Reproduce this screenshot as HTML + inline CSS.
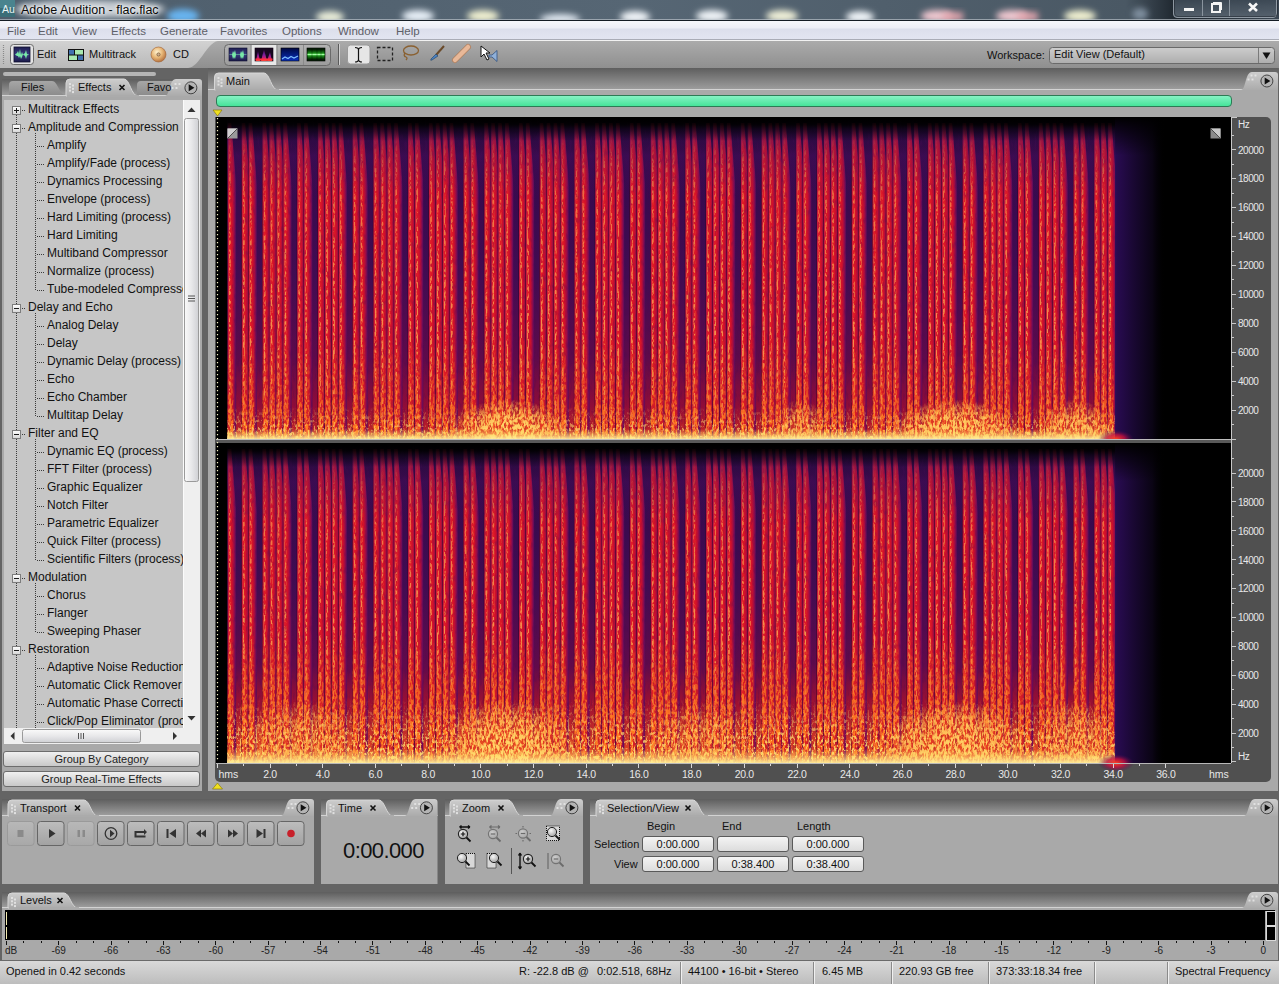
<!DOCTYPE html>
<html><head><meta charset="utf-8">
<style>
*{box-sizing:border-box}
html,body{margin:0;padding:0;width:1279px;height:984px;overflow:hidden;background:#646464;font-family:"Liberation Sans",sans-serif;}
.a{position:absolute}
.t{position:absolute;white-space:nowrap}
#title{left:0;top:0;width:1279px;height:21px;background:linear-gradient(90deg,#5d6a76 0px,#8d97a2 40px,#c4cad1 120px,#aab3bc 250px,#56636f 330px,#4b5866 600px,#4a5765 1279px);border-bottom:1px solid #1b2430}
#menu{left:0;top:21px;width:1279px;height:19px;background:linear-gradient(#f6f7fb 0,#eceef6 7px,#dcdfec 8px,#e2e5f1 100%);border-bottom:1px solid #a9acb6;font-size:11.5px;color:#5e6068}
#menu span{position:absolute;top:3.5px;margin-left:-1px}
#tool{left:0;top:40px;width:1279px;height:28px;background:linear-gradient(#ababab,#8f8f8f);border-top:1px solid #f2f2f2}
.strip{background:linear-gradient(#5c5c5c,#979797)}
.body{background:#a9a9a9;border-top:1px solid #d4d4d4}
.f11{font-size:11px}
.f12{font-size:12px}
.tree div{position:absolute;white-space:nowrap;font-size:12px;color:#111}
.btn{position:absolute;border:1px solid #7a7a7a;border-radius:4px;background:linear-gradient(#c4c4c4,#a4a4a4)}
.field{position:absolute;height:16px;background:linear-gradient(#f4f4f4,#dcdcdc);border:1px solid #5a5a5a;border-radius:3px;font-size:11px;color:#111;text-align:center;line-height:14px}
.gbtn{position:absolute;left:3px;width:197px;height:16px;border:1px solid #6c6c6c;border-radius:3px;background:linear-gradient(#f0f0f0,#c8c8c8);font-size:11px;color:#222;text-align:center;line-height:14px}
.hz{position:absolute;left:1238px;font-size:10px;letter-spacing:-0.45px;color:#e8e8e8;white-space:nowrap}
.tm{position:absolute;top:767.5px;font-size:10.5px;letter-spacing:-0.3px;color:#e8e8e8;white-space:nowrap;transform:translateX(-50%)}
.db{position:absolute;top:945px;font-size:10px;color:#222;white-space:nowrap;transform:translateX(-50%)}
.st{position:absolute;top:965px;font-size:11px;color:#111;white-space:nowrap}
.sep{position:absolute;top:962px;width:2px;height:22px;border-left:1px solid #8a8a8a;border-right:1px solid #f0f0f0}
</style></head><body>
<!-- TITLE -->
<svg class="a" style="left:0;top:0" width="1279" height="21">
 <defs>
  <filter id="bl4" x="-50%" y="-50%" width="200%" height="200%"><feGaussianBlur stdDeviation="3"/></filter>
  <filter id="bl6" x="-50%" y="-50%" width="200%" height="200%"><feGaussianBlur stdDeviation="7"/></filter>
  <linearGradient id="tbg" x1="0" y1="0" x2="1" y2="0"><stop offset="0" stop-color="#4e5e6c"/><stop offset="0.5" stop-color="#566674"/><stop offset="0.88" stop-color="#4a5864"/><stop offset="0.92" stop-color="#1e262e"/><stop offset="1" stop-color="#3a4652"/></linearGradient>
 </defs>
 <rect x="0" y="0" width="1279" height="21" fill="url(#tbg)"/>
 <g filter="url(#bl4)" opacity="1">
  <ellipse cx="90" cy="9" rx="75" ry="9" fill="#c8ced4"/>
  <ellipse cx="183" cy="16" rx="16" ry="7" fill="#68b4f0"/>
  <ellipse cx="330" cy="17" rx="14" ry="6" fill="#e8ecd8"/>
  <ellipse cx="418" cy="16" rx="16" ry="6" fill="#e8f0f8"/>
  <ellipse cx="483" cy="16" rx="16" ry="6" fill="#f0f0d0"/>
  <ellipse cx="560" cy="19" rx="20" ry="5" fill="#e0e8f0"/>
  <ellipse cx="635" cy="17" rx="15" ry="6" fill="#f0f4f8"/>
  <ellipse cx="712" cy="16" rx="16" ry="6" fill="#f0f4f8"/>
  <ellipse cx="782" cy="16" rx="16" ry="6" fill="#f0f0d8"/>
  <ellipse cx="860" cy="17" rx="14" ry="6" fill="#f0f4f8"/>
  <ellipse cx="937" cy="16" rx="16" ry="6" fill="#f0c8d0"/>
  <ellipse cx="1012" cy="16" rx="16" ry="6" fill="#f0c8d0"/>
  <ellipse cx="1080" cy="16" rx="16" ry="6" fill="#f0f0d0"/>
  <ellipse cx="1140" cy="14" rx="8" ry="6" fill="#8090a0"/>
 </g>
 <g opacity="0.9">
  <rect x="943" y="12" width="20" height="9" fill="#e8a8b0" filter="url(#bl4)"/>
  <rect x="1018" y="12" width="20" height="9" fill="#e8a8b0" filter="url(#bl4)"/>
 </g>
 <rect x="0" y="19" width="1279" height="1" fill="#c8ced6" opacity="0.6"/>
 <rect x="0" y="20" width="1279" height="1" fill="#141c24"/>
 <rect x="0" y="0" width="15" height="17" rx="1" fill="#3a6e78"/>
 <rect x="0" y="0" width="15" height="8" fill="#5a9aa4" opacity="0.5"/>
 <text x="2" y="12.5" font-family="Liberation Sans" font-size="10.5" fill="#e8f4f4">Au</text>
</svg>
<div class="t" style="left:21px;top:3px;font-size:12.5px;color:#0a0a0a;text-shadow:0 0 6px #fff,0 0 3px #fff">Adobe Audition - flac.flac</div>

<!-- MENU -->
<div id="menu" class="a">
  <span style="left:8px">File</span><span style="left:39px">Edit</span><span style="left:73px">View</span><span style="left:112px">Effects</span><span style="left:161px">Generate</span><span style="left:221px">Favorites</span><span style="left:283px">Options</span><span style="left:339px">Window</span><span style="left:397px">Help</span>
</div>
<!-- TOOLBAR -->
<div id="tool" class="a">
  <svg class="a" style="left:0;top:0" width="230" height="28"><defs><linearGradient id="tg" x1="0" y1="0" x2="0" y2="1"><stop offset="0" stop-color="#d2d2d2"/><stop offset="1" stop-color="#b9b9b9"/></linearGradient></defs><path d="M0 0 H218 C206 2 200 26 188 27 H0 Z" fill="url(#tg)"/></svg>
  <div class="t f11" style="left:37px;top:7px;color:#111">Edit</div>
  <div class="t f11" style="left:89px;top:7px;color:#111">Multitrack</div>
  <div class="t f11" style="left:173px;top:7px;color:#111">CD</div>
  <div class="t f11" style="left:987px;top:8px;color:#111">Workspace:</div>
  </div>

<!-- window buttons -->
<svg class="a" style="left:1173px;top:0" width="105" height="19">
 <defs><linearGradient id="wb" x1="0" y1="0" x2="0" y2="1"><stop offset="0" stop-color="#3e4a56"/><stop offset="1" stop-color="#5a6672"/></linearGradient></defs>
 <path d="M0.5,0 V14 Q0.5,17.5 4,17.5 H100 Q103.5,17.5 103.5,14 V0" fill="url(#wb)" stroke="#9aa4ae" stroke-width="1" opacity="0.9"/>
 <path d="M0.5,0 V14 Q0.5,17.5 4,17.5 H100 Q103.5,17.5 103.5,14 V0" fill="none" stroke="#1a2028" stroke-width="1" transform="translate(1,-1)" opacity="0.5"/>
 <line x1="29.5" y1="0" x2="29.5" y2="16" stroke="#8a949e"/><line x1="56.5" y1="0" x2="56.5" y2="16" stroke="#8a949e"/>
 <rect x="11" y="8" width="10" height="3" fill="#f4f4f4"/>
 <rect x="39" y="4" width="8" height="8" fill="none" stroke="#f4f4f4" stroke-width="2"/>
 <path d="M40,2.5 H48.5 V10" fill="none" stroke="#f4f4f4" stroke-width="1"/>
 <path d="M76,3.5 L84,11 M84,3.5 L76,11" stroke="#f8f8f8" stroke-width="2.6"/>
</svg>
<!-- toolbar -->
<svg class="a" style="left:0;top:40px" width="520" height="28">
 <defs>
  <linearGradient id="nv" x1="0" y1="0" x2="0" y2="1"><stop offset="0" stop-color="#1e1e50"/><stop offset="0.5" stop-color="#3a3a80"/><stop offset="1" stop-color="#1a1a48"/></linearGradient>
  <radialGradient id="cd" cx="0.4" cy="0.35" r="0.7"><stop offset="0" stop-color="#fff2d0"/><stop offset="0.5" stop-color="#e8b878"/><stop offset="1" stop-color="#b06a38"/></radialGradient>
  <linearGradient id="vb" x1="0" y1="0" x2="0" y2="1"><stop offset="0" stop-color="#b4b4b4"/><stop offset="1" stop-color="#9c9c9c"/></linearGradient>
  <linearGradient id="sp" x1="0" y1="0" x2="0" y2="1"><stop offset="0" stop-color="#200830"/><stop offset="0.5" stop-color="#8020a0"/><stop offset="0.85" stop-color="#e02060"/><stop offset="1" stop-color="#ff6020"/></linearGradient>
  <linearGradient id="bl" x1="0" y1="0" x2="0" y2="1"><stop offset="0" stop-color="#000840"/><stop offset="1" stop-color="#0830c0"/></linearGradient>
  <linearGradient id="gr" x1="0" y1="0" x2="0" y2="1"><stop offset="0" stop-color="#003000"/><stop offset="0.5" stop-color="#30e030"/><stop offset="1" stop-color="#003000"/></linearGradient>
 </defs>
 <line x1="3.5" y1="5" x2="3.5" y2="24" stroke="#8a8a8a" stroke-dasharray="1,1" stroke-width="1.2"/>
 <rect x="10.5" y="4.5" width="23" height="20" rx="3" fill="#e4e4e4" stroke="#6a6a6a"/>
 <rect x="14" y="7" width="16" height="15" fill="url(#nv)" stroke="#101030" stroke-width="0.8"/>
 <path d="M15,14.5 L17,13 L18,11 L19,14 L20,9 L21,15 L22,12 L23,14.5 L25,13 L26,10 L27,14 L29,14.5 L27,15.5 L26,19 L25,16 L23,14.5 L22,17 L21,19 L20,16 L19,18 L18,16 L17,16 Z" fill="#78e8a8"/>
 <rect x="68" y="9" width="16" height="12" fill="#111"/>
 <rect x="69" y="10" width="5" height="4.5" fill="#4070b0"/><rect x="75" y="10" width="8" height="4.5" fill="#a8e8b0"/>
 <rect x="69" y="15.5" width="8" height="4.5" fill="#a8e8b0"/><rect x="78" y="15.5" width="5" height="4.5" fill="#4070b0"/>
 <circle cx="158.5" cy="14.5" r="7.5" fill="url(#cd)" stroke="#a06030" stroke-width="0.6"/>
 <circle cx="158.5" cy="14.5" r="1.6" fill="#d0b090" stroke="#604020" stroke-width="0.6"/>
 <rect x="224.5" y="4.5" width="106" height="21" rx="4" fill="url(#vb)" stroke="#6a6a6a"/>
 <rect x="251.5" y="5" width="25" height="20" fill="#e8e8e8"/>
 <line x1="251" y1="5" x2="251" y2="25" stroke="#8a8a8a"/><line x1="277" y1="5" x2="277" y2="25" stroke="#8a8a8a"/><line x1="303.5" y1="5" x2="303.5" y2="25" stroke="#8a8a8a"/>
 <rect x="229" y="8" width="18" height="13" fill="url(#nv)" stroke="#101030" stroke-width="0.6"/>
 <path d="M229.5,14.5 H232 L233,11 L234,13 L235,10 L236,14.5 H238 H240 L241,11 L242,13 L243,10 L244,14.5 H246.5 V15 H244 L243,19 L242,17 L241,19 L240,15 H236 L235,19 L234,17 L233,19 L232,15 H229.5 Z" fill="#78e8a8"/>
 <rect x="255" y="8" width="18" height="13" fill="#180820" stroke="#100010" stroke-width="0.6"/>
 <path d="M256,21 L258,11 L260,21 Z M261,21 L264,9 L267,21 Z M267,21 L270,12 L272,21 Z" fill="url(#sp)"/>
 <rect x="255.5" y="18.5" width="17" height="2" fill="#ff3040"/>
 <rect x="281" y="8" width="18" height="13" fill="url(#bl)" stroke="#000" stroke-width="0.6"/>
 <path d="M282,19 L285,17 L288,18.5 L291,16.5 L294,18 L298,16" stroke="#80c0ff" stroke-width="1.2" fill="none"/>
 <rect x="307" y="8" width="18" height="13" fill="#062006" stroke="#000" stroke-width="0.6"/>
 <rect x="307.5" y="10" width="17" height="9" fill="url(#gr)" opacity="0.8"/>
 <path d="M307.5,14.5 H324.5" stroke="#a0ffa0" stroke-width="1.4"/>
 <path d="M312,9 V20 M317,9 V20 M321,9 V20" stroke="#000" stroke-width="0.5" opacity="0.6"/>
 <line x1="338.5" y1="4" x2="338.5" y2="25" stroke="#5a5a5a"/><line x1="339.5" y1="4" x2="339.5" y2="25" stroke="#d0d0d0"/>
 <rect x="347.5" y="5" width="22.5" height="19" rx="3" fill="#e6e6e6" stroke="#9a9a9a"/>
 <path d="M355,7.5 Q358.5,7.5 358.5,10 V19.5 Q358.5,22 355,22 M362,7.5 Q358.5,7.5 358.5,10 M362,22 Q358.5,22 358.5,19.5" fill="none" stroke="#111" stroke-width="1.2"/>
 <rect x="377.5" y="7.5" width="15" height="13" fill="none" stroke="#222" stroke-width="1.3" stroke-dasharray="3,2"/>
 <ellipse cx="411" cy="10.5" rx="7.5" ry="4.5" fill="none" stroke="#8a6030" stroke-width="1.3"/>
 <path d="M405,13 Q403,16 406,17 Q408,18 406,20" fill="none" stroke="#8a6030" stroke-width="1.3"/>
 <path d="M444,6 L436,15" stroke="#6a4a2a" stroke-width="2"/>
 <path d="M436,14 L431,19 Q430,21 432,20 L438,16 Z" fill="#4a80c0" stroke="#204060" stroke-width="0.6"/>
 <path d="M455,20 L468,7" stroke="#b08060" stroke-width="6" stroke-linecap="round"/>
 <path d="M455,20 L468,7" stroke="#e8b898" stroke-width="4.5" stroke-linecap="round"/>
 <path d="M481,6 L481,17 L484,14 L487,20 L489,19 L486,13 L490,13 Z" fill="#fff" stroke="#111" stroke-width="1"/>
 <path d="M489,15 H492 L497,10.5 V21.5 L492,17 H489 Z" fill="#90b0d8" stroke="#305080" stroke-width="0.8"/>
</svg>
<!-- workspace dropdown -->
<svg class="a" style="left:1049px;top:47px" width="227" height="17">
 <defs><linearGradient id="dd" x1="0" y1="0" x2="0" y2="1"><stop offset="0" stop-color="#cdcdcd"/><stop offset="1" stop-color="#adadad"/></linearGradient></defs>
 <rect x="0.5" y="0.5" width="225" height="16" rx="3" fill="url(#dd)" stroke="#6a6a6a"/>
 <line x1="209.5" y1="1" x2="209.5" y2="16" stroke="#7a7a7a"/>
 <path d="M213.5,5.5 H221.5 L217.5,12 Z" fill="#111"/>
</svg>

<div class="t f11" style="left:1054px;top:48px;color:#111">Edit View (Default)</div>
<!-- LEFT PANEL -->
<div class="a" style="left:3px;top:72px;width:153px;height:4px;border-radius:2px;background:#b4b4b4"></div>
<svg class="a" style="left:2px;top:79px;overflow:visible" width="200" height="712"><defs><linearGradient id="stL" x1="0" y1="0" x2="0" y2="1"><stop offset="0" stop-color="#5e5e5e"/><stop offset="1" stop-color="#9c9c9c"/></linearGradient><linearGradient id="taL" x1="0" y1="0" x2="0" y2="1"><stop offset="0" stop-color="#cdcdcd"/><stop offset="1" stop-color="#ababab"/></linearGradient><linearGradient id="tiL" x1="0" y1="0" x2="0" y2="1"><stop offset="0" stop-color="#a6a6a6"/><stop offset="1" stop-color="#8c8c8c"/></linearGradient></defs><rect x="0" y="0" width="200" height="16" fill="url(#stL)"/><rect x="0" y="16" width="200" height="696" fill="#a9a9a9"/><rect x="0" y="16" width="200" height="1" fill="#d2d2d2"/><path d="M7,16 V6 Q7,2 11,2 H50 C56,2 57,16 64,16 Z" fill="url(#tiL)" stroke="#9a9a9a" stroke-width="0"/><path d="M135,16 V6 Q135,2 139,2 H173 C179,2 180,16 187,16 Z" fill="url(#tiL)" stroke="#9a9a9a" stroke-width="0"/><path d="M64,17 V4 Q64,0 68,0 H122 C128,0 129,17 136,17 Z" fill="url(#taL)" stroke="#d6d6d6" stroke-width="1"/><rect x="65" y="16" width="72" height="2" fill="#ababab"/><g transform="translate(67,4)"><rect x="0" y="0.0" width="2" height="2" fill="#e0e0e0"/><rect x="3" y="1.5" width="2" height="2" fill="#e0e0e0"/><rect x="0" y="3.3" width="2" height="2" fill="#e0e0e0"/><rect x="3" y="4.8" width="2" height="2" fill="#e0e0e0"/><rect x="0" y="6.6" width="2" height="2" fill="#e0e0e0"/><rect x="3" y="8.1" width="2" height="2" fill="#e0e0e0"/></g><path d="M117.5,6.0 L122.5,11.0 M122.5,6.0 L117.5,11.0" stroke="#111" stroke-width="1.6"/><path d="M163,17 C168,17 167,0 174,0 H197 Q200,0 200,3 V17 Z" fill="url(#taL)"/><g transform="translate(169.5,4.0)"><rect x="3" y="0" width="2" height="2" fill="#e6e6e6" opacity="0.85"/><rect x="7" y="0" width="2" height="2" fill="#e6e6e6" opacity="0.85"/><rect x="0" y="4" width="2" height="2" fill="#e6e6e6" opacity="0.85"/><rect x="4" y="4" width="2" height="2" fill="#e6e6e6" opacity="0.85"/></g><circle cx="188.9" cy="8.8" r="6" fill="#b4b4b4" stroke="#444" stroke-width="1"/><path d="M186.70000000000002,5.300000000000001 L192.4,8.8 L186.70000000000002,12.3 Z" fill="#111"/></svg>
<div class="a" style="left:4px;top:100px;width:196px;height:644px;background:#c6c6c6"></div>
<div class="t f11" style="left:21px;top:81px;color:#111">Files</div>
<div class="t f11" style="left:78px;top:81px;color:#111">Effects</div>
<div class="t f11" style="left:147px;top:81px;color:#111">Favo</div>
<div class="tree a" style="left:0;top:0;width:183px;height:728px;overflow:hidden"><span style="position:absolute;left:16px;top:115px;width:1px;height:615px;background:repeating-linear-gradient(#3a3a3a 0 1px,transparent 1px 2px)"></span><span style="position:absolute;left:12px;top:105.5px;width:9px;height:9px;border:1px solid #7d7d7d;background:linear-gradient(#fdfdfd,#d8d8d8);z-index:1"></span><span style="position:absolute;left:14px;top:109.5px;width:5px;height:1px;background:#1a1a1a;z-index:2"></span><span style="position:absolute;left:16px;top:107.5px;width:1px;height:5px;background:#1a1a1a;z-index:2"></span><span style="position:absolute;left:22px;top:109.5px;width:4px;height:1px;background:repeating-linear-gradient(90deg,#3a3a3a 0 1px,transparent 1px 2px)"></span><div style="left:28px;top:102.0px">Multitrack Effects</div><span style="position:absolute;left:12px;top:123.5px;width:9px;height:9px;border:1px solid #7d7d7d;background:linear-gradient(#fdfdfd,#d8d8d8);z-index:1"></span><span style="position:absolute;left:14px;top:127.5px;width:5px;height:1px;background:#1a1a1a;z-index:2"></span><span style="position:absolute;left:22px;top:127.5px;width:4px;height:1px;background:repeating-linear-gradient(90deg,#3a3a3a 0 1px,transparent 1px 2px)"></span><div style="left:28px;top:120.0px">Amplitude and Compression</div><span style="position:absolute;left:35px;top:133.0px;width:1px;height:156.5px;background:repeating-linear-gradient(#3a3a3a 0 1px,transparent 1px 2px)"></span><span style="position:absolute;left:37px;top:145.5px;width:8px;height:1px;background:repeating-linear-gradient(90deg,#3a3a3a 0 1px,transparent 1px 2px)"></span><div style="left:47px;top:138.0px">Amplify</div><span style="position:absolute;left:37px;top:163.5px;width:8px;height:1px;background:repeating-linear-gradient(90deg,#3a3a3a 0 1px,transparent 1px 2px)"></span><div style="left:47px;top:156.0px">Amplify/Fade (process)</div><span style="position:absolute;left:37px;top:181.5px;width:8px;height:1px;background:repeating-linear-gradient(90deg,#3a3a3a 0 1px,transparent 1px 2px)"></span><div style="left:47px;top:174.0px">Dynamics Processing</div><span style="position:absolute;left:37px;top:199.5px;width:8px;height:1px;background:repeating-linear-gradient(90deg,#3a3a3a 0 1px,transparent 1px 2px)"></span><div style="left:47px;top:192.0px">Envelope (process)</div><span style="position:absolute;left:37px;top:217.5px;width:8px;height:1px;background:repeating-linear-gradient(90deg,#3a3a3a 0 1px,transparent 1px 2px)"></span><div style="left:47px;top:210.0px">Hard Limiting (process)</div><span style="position:absolute;left:37px;top:235.5px;width:8px;height:1px;background:repeating-linear-gradient(90deg,#3a3a3a 0 1px,transparent 1px 2px)"></span><div style="left:47px;top:228.0px">Hard Limiting</div><span style="position:absolute;left:37px;top:253.5px;width:8px;height:1px;background:repeating-linear-gradient(90deg,#3a3a3a 0 1px,transparent 1px 2px)"></span><div style="left:47px;top:246.0px">Multiband Compressor</div><span style="position:absolute;left:37px;top:271.5px;width:8px;height:1px;background:repeating-linear-gradient(90deg,#3a3a3a 0 1px,transparent 1px 2px)"></span><div style="left:47px;top:264.0px">Normalize (process)</div><span style="position:absolute;left:37px;top:289.5px;width:8px;height:1px;background:repeating-linear-gradient(90deg,#3a3a3a 0 1px,transparent 1px 2px)"></span><div style="left:47px;top:282.0px">Tube-modeled Compressor</div><span style="position:absolute;left:12px;top:303.5px;width:9px;height:9px;border:1px solid #7d7d7d;background:linear-gradient(#fdfdfd,#d8d8d8);z-index:1"></span><span style="position:absolute;left:14px;top:307.5px;width:5px;height:1px;background:#1a1a1a;z-index:2"></span><span style="position:absolute;left:22px;top:307.5px;width:4px;height:1px;background:repeating-linear-gradient(90deg,#3a3a3a 0 1px,transparent 1px 2px)"></span><div style="left:28px;top:300.0px">Delay and Echo</div><span style="position:absolute;left:35px;top:313.0px;width:1px;height:102.5px;background:repeating-linear-gradient(#3a3a3a 0 1px,transparent 1px 2px)"></span><span style="position:absolute;left:37px;top:325.5px;width:8px;height:1px;background:repeating-linear-gradient(90deg,#3a3a3a 0 1px,transparent 1px 2px)"></span><div style="left:47px;top:318.0px">Analog Delay</div><span style="position:absolute;left:37px;top:343.5px;width:8px;height:1px;background:repeating-linear-gradient(90deg,#3a3a3a 0 1px,transparent 1px 2px)"></span><div style="left:47px;top:336.0px">Delay</div><span style="position:absolute;left:37px;top:361.5px;width:8px;height:1px;background:repeating-linear-gradient(90deg,#3a3a3a 0 1px,transparent 1px 2px)"></span><div style="left:47px;top:354.0px">Dynamic Delay (process)</div><span style="position:absolute;left:37px;top:379.5px;width:8px;height:1px;background:repeating-linear-gradient(90deg,#3a3a3a 0 1px,transparent 1px 2px)"></span><div style="left:47px;top:372.0px">Echo</div><span style="position:absolute;left:37px;top:397.5px;width:8px;height:1px;background:repeating-linear-gradient(90deg,#3a3a3a 0 1px,transparent 1px 2px)"></span><div style="left:47px;top:390.0px">Echo Chamber</div><span style="position:absolute;left:37px;top:415.5px;width:8px;height:1px;background:repeating-linear-gradient(90deg,#3a3a3a 0 1px,transparent 1px 2px)"></span><div style="left:47px;top:408.0px">Multitap Delay</div><span style="position:absolute;left:12px;top:429.5px;width:9px;height:9px;border:1px solid #7d7d7d;background:linear-gradient(#fdfdfd,#d8d8d8);z-index:1"></span><span style="position:absolute;left:14px;top:433.5px;width:5px;height:1px;background:#1a1a1a;z-index:2"></span><span style="position:absolute;left:22px;top:433.5px;width:4px;height:1px;background:repeating-linear-gradient(90deg,#3a3a3a 0 1px,transparent 1px 2px)"></span><div style="left:28px;top:426.0px">Filter and EQ</div><span style="position:absolute;left:35px;top:439.0px;width:1px;height:120.5px;background:repeating-linear-gradient(#3a3a3a 0 1px,transparent 1px 2px)"></span><span style="position:absolute;left:37px;top:451.5px;width:8px;height:1px;background:repeating-linear-gradient(90deg,#3a3a3a 0 1px,transparent 1px 2px)"></span><div style="left:47px;top:444.0px">Dynamic EQ (process)</div><span style="position:absolute;left:37px;top:469.5px;width:8px;height:1px;background:repeating-linear-gradient(90deg,#3a3a3a 0 1px,transparent 1px 2px)"></span><div style="left:47px;top:462.0px">FFT Filter (process)</div><span style="position:absolute;left:37px;top:487.5px;width:8px;height:1px;background:repeating-linear-gradient(90deg,#3a3a3a 0 1px,transparent 1px 2px)"></span><div style="left:47px;top:480.0px">Graphic Equalizer</div><span style="position:absolute;left:37px;top:505.5px;width:8px;height:1px;background:repeating-linear-gradient(90deg,#3a3a3a 0 1px,transparent 1px 2px)"></span><div style="left:47px;top:498.0px">Notch Filter</div><span style="position:absolute;left:37px;top:523.5px;width:8px;height:1px;background:repeating-linear-gradient(90deg,#3a3a3a 0 1px,transparent 1px 2px)"></span><div style="left:47px;top:516.0px">Parametric Equalizer</div><span style="position:absolute;left:37px;top:541.5px;width:8px;height:1px;background:repeating-linear-gradient(90deg,#3a3a3a 0 1px,transparent 1px 2px)"></span><div style="left:47px;top:534.0px">Quick Filter (process)</div><span style="position:absolute;left:37px;top:559.5px;width:8px;height:1px;background:repeating-linear-gradient(90deg,#3a3a3a 0 1px,transparent 1px 2px)"></span><div style="left:47px;top:552.0px">Scientific Filters (process)</div><span style="position:absolute;left:12px;top:573.5px;width:9px;height:9px;border:1px solid #7d7d7d;background:linear-gradient(#fdfdfd,#d8d8d8);z-index:1"></span><span style="position:absolute;left:14px;top:577.5px;width:5px;height:1px;background:#1a1a1a;z-index:2"></span><span style="position:absolute;left:22px;top:577.5px;width:4px;height:1px;background:repeating-linear-gradient(90deg,#3a3a3a 0 1px,transparent 1px 2px)"></span><div style="left:28px;top:570.0px">Modulation</div><span style="position:absolute;left:35px;top:583.0px;width:1px;height:48.5px;background:repeating-linear-gradient(#3a3a3a 0 1px,transparent 1px 2px)"></span><span style="position:absolute;left:37px;top:595.5px;width:8px;height:1px;background:repeating-linear-gradient(90deg,#3a3a3a 0 1px,transparent 1px 2px)"></span><div style="left:47px;top:588.0px">Chorus</div><span style="position:absolute;left:37px;top:613.5px;width:8px;height:1px;background:repeating-linear-gradient(90deg,#3a3a3a 0 1px,transparent 1px 2px)"></span><div style="left:47px;top:606.0px">Flanger</div><span style="position:absolute;left:37px;top:631.5px;width:8px;height:1px;background:repeating-linear-gradient(90deg,#3a3a3a 0 1px,transparent 1px 2px)"></span><div style="left:47px;top:624.0px">Sweeping Phaser</div><span style="position:absolute;left:12px;top:645.5px;width:9px;height:9px;border:1px solid #7d7d7d;background:linear-gradient(#fdfdfd,#d8d8d8);z-index:1"></span><span style="position:absolute;left:14px;top:649.5px;width:5px;height:1px;background:#1a1a1a;z-index:2"></span><span style="position:absolute;left:22px;top:649.5px;width:4px;height:1px;background:repeating-linear-gradient(90deg,#3a3a3a 0 1px,transparent 1px 2px)"></span><div style="left:28px;top:642.0px">Restoration</div><span style="position:absolute;left:35px;top:655.0px;width:1px;height:80px;background:repeating-linear-gradient(#3a3a3a 0 1px,transparent 1px 2px)"></span><span style="position:absolute;left:37px;top:667.5px;width:8px;height:1px;background:repeating-linear-gradient(90deg,#3a3a3a 0 1px,transparent 1px 2px)"></span><div style="left:47px;top:660.0px">Adaptive Noise Reduction</div><span style="position:absolute;left:37px;top:685.5px;width:8px;height:1px;background:repeating-linear-gradient(90deg,#3a3a3a 0 1px,transparent 1px 2px)"></span><div style="left:47px;top:678.0px">Automatic Click Remover</div><span style="position:absolute;left:37px;top:703.5px;width:8px;height:1px;background:repeating-linear-gradient(90deg,#3a3a3a 0 1px,transparent 1px 2px)"></span><div style="left:47px;top:696.0px">Automatic Phase Correction</div><span style="position:absolute;left:37px;top:721.5px;width:8px;height:1px;background:repeating-linear-gradient(90deg,#3a3a3a 0 1px,transparent 1px 2px)"></span><div style="left:47px;top:714.0px">Click/Pop Eliminator (process)</div></div>
<div class="gbtn" style="top:751px">Group By Category</div>
<div class="gbtn" style="top:771px">Group Real-Time Effects</div>

<!-- MAIN PANEL -->
<svg class="a" style="left:208px;top:68px;overflow:visible" width="1070" height="723"><defs><linearGradient id="stM" x1="0" y1="0" x2="0" y2="1"><stop offset="0" stop-color="#5e5e5e"/><stop offset="1" stop-color="#9c9c9c"/></linearGradient><linearGradient id="taM" x1="0" y1="0" x2="0" y2="1"><stop offset="0" stop-color="#cdcdcd"/><stop offset="1" stop-color="#ababab"/></linearGradient><linearGradient id="tiM" x1="0" y1="0" x2="0" y2="1"><stop offset="0" stop-color="#a6a6a6"/><stop offset="1" stop-color="#8c8c8c"/></linearGradient></defs><rect x="0" y="0" width="1070" height="21" fill="url(#stM)"/><rect x="0" y="21" width="1070" height="702" fill="#a9a9a9"/><rect x="0" y="21" width="1070" height="1" fill="#d2d2d2"/><path d="M6.5,22 V9 Q6.5,5 10.5,5 H56 C62,5 63,22 70,22 Z" fill="url(#taM)" stroke="#d6d6d6" stroke-width="1"/><rect x="7.5" y="21" width="63.5" height="2" fill="#ababab"/><g transform="translate(9.5,9)"><rect x="0" y="0.0" width="2" height="2" fill="#e0e0e0"/><rect x="3" y="1.5" width="2" height="2" fill="#e0e0e0"/><rect x="0" y="3.3" width="2" height="2" fill="#e0e0e0"/><rect x="3" y="4.8" width="2" height="2" fill="#e0e0e0"/><rect x="0" y="6.6" width="2" height="2" fill="#e0e0e0"/><rect x="3" y="8.1" width="2" height="2" fill="#e0e0e0"/></g><path d="M1033,22 C1038,22 1037,4 1044,4 H1067 Q1070,4 1070,7 V22 Z" fill="url(#taM)"/><g transform="translate(1039.5,6.5)"><rect x="3" y="0" width="2" height="2" fill="#e6e6e6" opacity="0.85"/><rect x="7" y="0" width="2" height="2" fill="#e6e6e6" opacity="0.85"/><rect x="0" y="4" width="2" height="2" fill="#e6e6e6" opacity="0.85"/><rect x="4" y="4" width="2" height="2" fill="#e6e6e6" opacity="0.85"/></g><circle cx="1058.9" cy="13.0" r="6" fill="#b4b4b4" stroke="#444" stroke-width="1"/><path d="M1056.7,9.5 L1062.4,13.0 L1056.7,16.5 Z" fill="#111"/></svg>
<div class="t f11" style="left:226px;top:75px;color:#111">Main</div>
<div class="a" style="left:216px;top:95px;width:1016px;height:12px;border:1px solid #2d7a55;border-radius:4px;background:linear-gradient(#86f2c4,#46e49a)"></div>
<div class="a" style="left:215px;top:117px;width:1056px;height:665px;background:#505050;border-radius:0 5px 5px 5px"></div>
<div class="a" style="left:216px;top:117px;width:1015px;height:646px;background:#000"></div>
<div id="spec"><svg class="a" style="left:0;top:0" width="1279" height="984"><defs><linearGradient id="sh" x1="0" y1="0" x2="1" y2="0"><stop offset="0" stop-color="#2a0018" stop-opacity="0.8"/><stop offset="0.1" stop-color="#c41a40"/><stop offset="0.24" stop-color="#e41e26"/><stop offset="0.5" stop-color="#d0102a"/><stop offset="0.7" stop-color="#a00c44"/><stop offset="0.86" stop-color="#6a0c58"/><stop offset="1" stop-color="#4a0c58" stop-opacity="0"/></linearGradient><linearGradient id="gap1" x1="0" y1="0" x2="0" y2="1"><stop offset="0" stop-color="#000"/><stop offset="0.04" stop-color="#0c0418"/><stop offset="0.12" stop-color="#340a4c"/><stop offset="0.5" stop-color="#420c52"/><stop offset="0.75" stop-color="#5e0a4a"/><stop offset="0.9" stop-color="#900c38"/><stop offset="1" stop-color="#d02820"/></linearGradient><linearGradient id="gap2" x1="0" y1="0" x2="0" y2="1"><stop offset="0" stop-color="#000"/><stop offset="0.04" stop-color="#0c0418"/><stop offset="0.12" stop-color="#340a4c"/><stop offset="0.45" stop-color="#420c52"/><stop offset="0.7" stop-color="#620a4a"/><stop offset="0.82" stop-color="#a01030"/><stop offset="1" stop-color="#f05020"/></linearGradient><linearGradient id="topfade" x1="0" y1="0" x2="0" y2="1"><stop offset="0" stop-color="#000"/><stop offset="0.3" stop-color="#000" stop-opacity="0.9"/><stop offset="1" stop-color="#000" stop-opacity="0"/></linearGradient><linearGradient id="tint" x1="0" y1="0" x2="0" y2="1"><stop offset="0" stop-color="#40106a" stop-opacity="0"/><stop offset="0.15" stop-color="#40106a" stop-opacity="0.6"/><stop offset="0.4" stop-color="#501060" stop-opacity="0.3"/><stop offset="1" stop-color="#501060" stop-opacity="0"/></linearGradient><linearGradient id="haze" x1="0" y1="0" x2="1" y2="0"><stop offset="0" stop-color="#2c0c58" stop-opacity="0.95"/><stop offset="0.35" stop-color="#1a0834"/><stop offset="0.75" stop-color="#0a0414"/><stop offset="1" stop-color="#000" stop-opacity="0"/></linearGradient><linearGradient id="hazev" x1="0" y1="0" x2="0" y2="1"><stop offset="0" stop-color="#000" stop-opacity="1"/><stop offset="0.12" stop-color="#000" stop-opacity="0"/><stop offset="0.85" stop-color="#000" stop-opacity="0"/><stop offset="1" stop-color="#000" stop-opacity="0"/></linearGradient><linearGradient id="cg1" x1="0" y1="0" x2="0" y2="1"><stop offset="0" stop-color="#000"/><stop offset="0.06" stop-color="#000"/><stop offset="0.15" stop-color="#777"/><stop offset="0.7" stop-color="#bbb"/><stop offset="1" stop-color="#fff"/></linearGradient><linearGradient id="cg2" x1="0" y1="0" x2="0" y2="1"><stop offset="0" stop-color="#000"/><stop offset="0.06" stop-color="#000"/><stop offset="0.15" stop-color="#777"/><stop offset="0.6" stop-color="#bbb"/><stop offset="1" stop-color="#fff"/></linearGradient><linearGradient id="hg1" x1="0" y1="0" x2="0" y2="1"><stop offset="0" stop-color="#000"/><stop offset="0.68" stop-color="#000"/><stop offset="0.86" stop-color="#777"/><stop offset="0.96" stop-color="#fff"/><stop offset="1" stop-color="#fff"/></linearGradient><linearGradient id="hg2" x1="0" y1="0" x2="0" y2="1"><stop offset="0" stop-color="#000"/><stop offset="0.6" stop-color="#000"/><stop offset="0.78" stop-color="#aaa"/><stop offset="0.9" stop-color="#fff"/><stop offset="1" stop-color="#fff"/></linearGradient><linearGradient id="yg1" x1="0" y1="0" x2="0" y2="1"><stop offset="0" stop-color="#000"/><stop offset="0.9" stop-color="#000"/><stop offset="0.97" stop-color="#aaa"/><stop offset="1" stop-color="#fff"/></linearGradient><linearGradient id="yg2" x1="0" y1="0" x2="0" y2="1"><stop offset="0" stop-color="#000"/><stop offset="0.8" stop-color="#000"/><stop offset="0.92" stop-color="#bbb"/><stop offset="1" stop-color="#fff"/></linearGradient><linearGradient id="bot" x1="0" y1="0" x2="0" y2="1"><stop offset="0" stop-color="#ffe070" stop-opacity="0"/><stop offset="0.5" stop-color="#ffe070" stop-opacity="0.5"/><stop offset="1" stop-color="#fff0a0" stop-opacity="0.95"/></linearGradient><radialGradient id="rglow"><stop offset="0" stop-color="#ff4020"/><stop offset="0.5" stop-color="#c01040" stop-opacity="0.8"/><stop offset="1" stop-color="#400a50" stop-opacity="0"/></radialGradient><radialGradient id="rg"><stop offset="0" stop-color="#fff"/><stop offset="0.5" stop-color="#fff" stop-opacity="0.8"/><stop offset="1" stop-color="#fff" stop-opacity="0"/></radialGradient><filter id="blur8" x="-50%" y="-50%" width="200%" height="200%"><feGaussianBlur stdDeviation="10"/></filter><filter id="spk1" x="0" y="0" width="100%" height="100%" filterUnits="objectBoundingBox" color-interpolation-filters="sRGB"><feTurbulence type="fractalNoise" baseFrequency="0.7 0.22" numOctaves="2" seed="5" result="n"/><feColorMatrix in="n" type="matrix" values="0 0 0 0 0  0 0 0 0 0  0 0 0 0 0  7 0 0 0 -3.0" result="a"/><feComposite in="SourceGraphic" in2="a" operator="in"/></filter><filter id="spk2" x="0" y="0" width="100%" height="100%" filterUnits="objectBoundingBox" color-interpolation-filters="sRGB"><feTurbulence type="fractalNoise" baseFrequency="0.45 0.2" numOctaves="2" seed="9" result="n"/><feColorMatrix in="n" type="matrix" values="0 0 0 0 0  0 0 0 0 0  0 0 0 0 0  6 0 0 0 -2.6" result="a"/><feComposite in="SourceGraphic" in2="a" operator="in"/></filter><filter id="spk3" x="0" y="0" width="100%" height="100%" filterUnits="objectBoundingBox" color-interpolation-filters="sRGB"><feTurbulence type="fractalNoise" baseFrequency="0.5 0.25" numOctaves="2" seed="13" result="n"/><feColorMatrix in="n" type="matrix" values="0 0 0 0 0  0 0 0 0 0  0 0 0 0 0  6 0 0 0 -3.0" result="a"/><feComposite in="SourceGraphic" in2="a" operator="in"/></filter><filter id="mot" x="0" y="0" width="100%" height="100%" filterUnits="objectBoundingBox" color-interpolation-filters="sRGB"><feTurbulence type="fractalNoise" baseFrequency="0.4 0.12" numOctaves="2" seed="21" result="n"/><feColorMatrix in="n" type="matrix" values="0 0 0 0 0  0 0 0 0 0  0 0 0 0 0  5 0 0 0 -2.7" result="a"/><feComposite in="SourceGraphic" in2="a" operator="in"/></filter><mask id="core1" maskUnits="userSpaceOnUse" x="0" y="0" width="1279" height="984"><g fill="url(#cg1)"><rect x="229.0" y="117" width="1.8" height="322"/><rect x="242.9" y="117" width="1.8" height="322"/><rect x="249.8" y="117" width="1.8" height="322"/><rect x="263.7" y="117" width="1.8" height="322"/><rect x="270.6" y="117" width="1.8" height="322"/><rect x="277.6" y="117" width="1.8" height="322"/><rect x="284.5" y="117" width="1.8" height="322"/><rect x="298.4" y="117" width="1.8" height="322"/><rect x="305.3" y="117" width="1.8" height="322"/><rect x="319.1" y="117" width="1.8" height="322"/><rect x="326.1" y="117" width="1.8" height="322"/><rect x="333.0" y="117" width="1.8" height="322"/><rect x="339.9" y="117" width="1.8" height="322"/><rect x="353.8" y="117" width="1.8" height="322"/><rect x="360.7" y="117" width="1.8" height="322"/><rect x="374.6" y="117" width="1.8" height="322"/><rect x="381.5" y="117" width="1.8" height="322"/><rect x="388.5" y="117" width="1.8" height="322"/><rect x="395.4" y="117" width="1.8" height="322"/><rect x="409.3" y="117" width="1.8" height="322"/><rect x="416.2" y="117" width="1.8" height="322"/><rect x="430.1" y="117" width="1.8" height="322"/><rect x="437.0" y="117" width="1.8" height="322"/><rect x="443.9" y="117" width="1.8" height="322"/><rect x="450.8" y="117" width="1.8" height="322"/><rect x="464.7" y="117" width="1.8" height="322"/><rect x="471.6" y="117" width="1.8" height="322"/><rect x="485.5" y="117" width="1.8" height="322"/><rect x="492.4" y="117" width="1.8" height="322"/><rect x="499.4" y="117" width="1.8" height="322"/><rect x="506.3" y="117" width="1.8" height="322"/><rect x="520.2" y="117" width="1.8" height="322"/><rect x="527.1" y="117" width="1.8" height="322"/><rect x="540.9" y="117" width="1.8" height="322"/><rect x="547.9" y="117" width="1.8" height="322"/><rect x="554.8" y="117" width="1.8" height="322"/><rect x="561.7" y="117" width="1.8" height="322"/><rect x="575.6" y="117" width="1.8" height="322"/><rect x="582.5" y="117" width="1.8" height="322"/><rect x="596.4" y="117" width="1.8" height="322"/><rect x="603.3" y="117" width="1.8" height="322"/><rect x="610.3" y="117" width="1.8" height="322"/><rect x="617.2" y="117" width="1.8" height="322"/><rect x="631.1" y="117" width="1.8" height="322"/><rect x="638.0" y="117" width="1.8" height="322"/><rect x="651.9" y="117" width="1.8" height="322"/><rect x="658.8" y="117" width="1.8" height="322"/><rect x="665.7" y="117" width="1.8" height="322"/><rect x="672.6" y="117" width="1.8" height="322"/><rect x="686.5" y="117" width="1.8" height="322"/><rect x="693.4" y="117" width="1.8" height="322"/><rect x="707.3" y="117" width="1.8" height="322"/><rect x="714.2" y="117" width="1.8" height="322"/><rect x="721.2" y="117" width="1.8" height="322"/><rect x="728.1" y="117" width="1.8" height="322"/><rect x="742.0" y="117" width="1.8" height="322"/><rect x="748.9" y="117" width="1.8" height="322"/><rect x="762.8" y="117" width="1.8" height="322"/><rect x="769.7" y="117" width="1.8" height="322"/><rect x="776.6" y="117" width="1.8" height="322"/><rect x="783.5" y="117" width="1.8" height="322"/><rect x="797.4" y="117" width="1.8" height="322"/><rect x="804.3" y="117" width="1.8" height="322"/><rect x="818.2" y="117" width="1.8" height="322"/><rect x="825.1" y="117" width="1.8" height="322"/><rect x="832.1" y="117" width="1.8" height="322"/><rect x="839.0" y="117" width="1.8" height="322"/><rect x="852.9" y="117" width="1.8" height="322"/><rect x="859.8" y="117" width="1.8" height="322"/><rect x="873.6" y="117" width="1.8" height="322"/><rect x="880.6" y="117" width="1.8" height="322"/><rect x="887.5" y="117" width="1.8" height="322"/><rect x="894.4" y="117" width="1.8" height="322"/><rect x="908.3" y="117" width="1.8" height="322"/><rect x="915.2" y="117" width="1.8" height="322"/><rect x="929.1" y="117" width="1.8" height="322"/><rect x="936.0" y="117" width="1.8" height="322"/><rect x="943.0" y="117" width="1.8" height="322"/><rect x="949.9" y="117" width="1.8" height="322"/><rect x="963.8" y="117" width="1.8" height="322"/><rect x="970.7" y="117" width="1.8" height="322"/><rect x="984.6" y="117" width="1.8" height="322"/><rect x="991.5" y="117" width="1.8" height="322"/><rect x="998.4" y="117" width="1.8" height="322"/><rect x="1005.3" y="117" width="1.8" height="322"/><rect x="1019.2" y="117" width="1.8" height="322"/><rect x="1026.1" y="117" width="1.8" height="322"/><rect x="1040.0" y="117" width="1.8" height="322"/><rect x="1046.9" y="117" width="1.8" height="322"/><rect x="1053.9" y="117" width="1.8" height="322"/><rect x="1060.8" y="117" width="1.8" height="322"/><rect x="1074.7" y="117" width="1.8" height="322"/><rect x="1081.6" y="117" width="1.8" height="322"/><rect x="1095.5" y="117" width="1.8" height="322"/><rect x="1102.4" y="117" width="1.8" height="322"/><rect x="1109.3" y="117" width="1.8" height="322"/></g></mask><mask id="hm1" maskUnits="userSpaceOnUse" x="0" y="0" width="1279" height="984"><g fill="url(#hg1)"><rect x="227.8" y="117" width="5.6" height="322"/><rect x="241.7" y="117" width="5.6" height="322"/><rect x="248.6" y="117" width="5.6" height="322"/><rect x="262.5" y="117" width="5.6" height="322"/><rect x="269.4" y="117" width="5.6" height="322"/><rect x="276.4" y="117" width="5.6" height="322"/><rect x="283.3" y="117" width="5.6" height="322"/><rect x="297.2" y="117" width="5.6" height="322"/><rect x="304.1" y="117" width="5.6" height="322"/><rect x="317.9" y="117" width="5.6" height="322"/><rect x="324.9" y="117" width="5.6" height="322"/><rect x="331.8" y="117" width="5.6" height="322"/><rect x="338.7" y="117" width="5.6" height="322"/><rect x="352.6" y="117" width="5.6" height="322"/><rect x="359.5" y="117" width="5.6" height="322"/><rect x="373.4" y="117" width="5.6" height="322"/><rect x="380.3" y="117" width="5.6" height="322"/><rect x="387.3" y="117" width="5.6" height="322"/><rect x="394.2" y="117" width="5.6" height="322"/><rect x="408.1" y="117" width="5.6" height="322"/><rect x="415.0" y="117" width="5.6" height="322"/><rect x="428.9" y="117" width="5.6" height="322"/><rect x="435.8" y="117" width="5.6" height="322"/><rect x="442.7" y="117" width="5.6" height="322"/><rect x="449.6" y="117" width="5.6" height="322"/><rect x="463.5" y="117" width="5.6" height="322"/><rect x="470.4" y="117" width="5.6" height="322"/><rect x="484.3" y="117" width="5.6" height="322"/><rect x="491.2" y="117" width="5.6" height="322"/><rect x="498.2" y="117" width="5.6" height="322"/><rect x="505.1" y="117" width="5.6" height="322"/><rect x="519.0" y="117" width="5.6" height="322"/><rect x="525.9" y="117" width="5.6" height="322"/><rect x="539.8" y="117" width="5.6" height="322"/><rect x="546.7" y="117" width="5.6" height="322"/><rect x="553.6" y="117" width="5.6" height="322"/><rect x="560.5" y="117" width="5.6" height="322"/><rect x="574.4" y="117" width="5.6" height="322"/><rect x="581.3" y="117" width="5.6" height="322"/><rect x="595.2" y="117" width="5.6" height="322"/><rect x="602.1" y="117" width="5.6" height="322"/><rect x="609.1" y="117" width="5.6" height="322"/><rect x="616.0" y="117" width="5.6" height="322"/><rect x="629.9" y="117" width="5.6" height="322"/><rect x="636.8" y="117" width="5.6" height="322"/><rect x="650.7" y="117" width="5.6" height="322"/><rect x="657.6" y="117" width="5.6" height="322"/><rect x="664.5" y="117" width="5.6" height="322"/><rect x="671.4" y="117" width="5.6" height="322"/><rect x="685.3" y="117" width="5.6" height="322"/><rect x="692.2" y="117" width="5.6" height="322"/><rect x="706.1" y="117" width="5.6" height="322"/><rect x="713.0" y="117" width="5.6" height="322"/><rect x="720.0" y="117" width="5.6" height="322"/><rect x="726.9" y="117" width="5.6" height="322"/><rect x="740.8" y="117" width="5.6" height="322"/><rect x="747.7" y="117" width="5.6" height="322"/><rect x="761.6" y="117" width="5.6" height="322"/><rect x="768.5" y="117" width="5.6" height="322"/><rect x="775.4" y="117" width="5.6" height="322"/><rect x="782.3" y="117" width="5.6" height="322"/><rect x="796.2" y="117" width="5.6" height="322"/><rect x="803.1" y="117" width="5.6" height="322"/><rect x="817.0" y="117" width="5.6" height="322"/><rect x="823.9" y="117" width="5.6" height="322"/><rect x="830.9" y="117" width="5.6" height="322"/><rect x="837.8" y="117" width="5.6" height="322"/><rect x="851.7" y="117" width="5.6" height="322"/><rect x="858.6" y="117" width="5.6" height="322"/><rect x="872.5" y="117" width="5.6" height="322"/><rect x="879.4" y="117" width="5.6" height="322"/><rect x="886.3" y="117" width="5.6" height="322"/><rect x="893.2" y="117" width="5.6" height="322"/><rect x="907.1" y="117" width="5.6" height="322"/><rect x="914.0" y="117" width="5.6" height="322"/><rect x="927.9" y="117" width="5.6" height="322"/><rect x="934.8" y="117" width="5.6" height="322"/><rect x="941.8" y="117" width="5.6" height="322"/><rect x="948.7" y="117" width="5.6" height="322"/><rect x="962.6" y="117" width="5.6" height="322"/><rect x="969.5" y="117" width="5.6" height="322"/><rect x="983.4" y="117" width="5.6" height="322"/><rect x="990.3" y="117" width="5.6" height="322"/><rect x="997.2" y="117" width="5.6" height="322"/><rect x="1004.1" y="117" width="5.6" height="322"/><rect x="1018.0" y="117" width="5.6" height="322"/><rect x="1024.9" y="117" width="5.6" height="322"/><rect x="1038.8" y="117" width="5.6" height="322"/><rect x="1045.7" y="117" width="5.6" height="322"/><rect x="1052.7" y="117" width="5.6" height="322"/><rect x="1059.6" y="117" width="5.6" height="322"/><rect x="1073.5" y="117" width="5.6" height="322"/><rect x="1080.4" y="117" width="5.6" height="322"/><rect x="1094.2" y="117" width="5.6" height="322"/><rect x="1101.2" y="117" width="5.6" height="322"/><rect x="1108.1" y="117" width="5.6" height="322"/></g><ellipse cx="508" cy="439" rx="62" ry="40" fill="url(#rg)" opacity="1.0"/><ellipse cx="955" cy="439" rx="70" ry="40" fill="url(#rg)" opacity="0.9"/><ellipse cx="1075" cy="439" rx="40" ry="40" fill="url(#rg)" opacity="0.7"/><ellipse cx="800" cy="439" rx="30" ry="40" fill="url(#rg)" opacity="0.5"/></mask><mask id="hz1" maskUnits="userSpaceOnUse" x="0" y="0" width="1279" height="984"><ellipse cx="508" cy="439" rx="62" ry="40" fill="url(#rg)" opacity="1.0"/><ellipse cx="955" cy="439" rx="70" ry="40" fill="url(#rg)" opacity="0.9"/><ellipse cx="1075" cy="439" rx="40" ry="40" fill="url(#rg)" opacity="0.7"/><ellipse cx="800" cy="439" rx="30" ry="40" fill="url(#rg)" opacity="0.5"/></mask><mask id="ym1" maskUnits="userSpaceOnUse" x="0" y="0" width="1279" height="984"><rect x="0" y="117" width="1279" height="322" fill="url(#yg1)"/><ellipse cx="508" cy="439" rx="62" ry="40" fill="url(#rg)" opacity="1.0"/><ellipse cx="955" cy="439" rx="70" ry="40" fill="url(#rg)" opacity="0.9"/><ellipse cx="1075" cy="439" rx="40" ry="40" fill="url(#rg)" opacity="0.7"/><ellipse cx="800" cy="439" rx="30" ry="40" fill="url(#rg)" opacity="0.5"/></mask><mask id="core2" maskUnits="userSpaceOnUse" x="0" y="0" width="1279" height="984"><g fill="url(#cg2)"><rect x="229.0" y="443" width="1.8" height="320"/><rect x="242.9" y="443" width="1.8" height="320"/><rect x="249.8" y="443" width="1.8" height="320"/><rect x="263.7" y="443" width="1.8" height="320"/><rect x="270.6" y="443" width="1.8" height="320"/><rect x="277.6" y="443" width="1.8" height="320"/><rect x="284.5" y="443" width="1.8" height="320"/><rect x="298.4" y="443" width="1.8" height="320"/><rect x="305.3" y="443" width="1.8" height="320"/><rect x="319.1" y="443" width="1.8" height="320"/><rect x="326.1" y="443" width="1.8" height="320"/><rect x="333.0" y="443" width="1.8" height="320"/><rect x="339.9" y="443" width="1.8" height="320"/><rect x="353.8" y="443" width="1.8" height="320"/><rect x="360.7" y="443" width="1.8" height="320"/><rect x="374.6" y="443" width="1.8" height="320"/><rect x="381.5" y="443" width="1.8" height="320"/><rect x="388.5" y="443" width="1.8" height="320"/><rect x="395.4" y="443" width="1.8" height="320"/><rect x="409.3" y="443" width="1.8" height="320"/><rect x="416.2" y="443" width="1.8" height="320"/><rect x="430.1" y="443" width="1.8" height="320"/><rect x="437.0" y="443" width="1.8" height="320"/><rect x="443.9" y="443" width="1.8" height="320"/><rect x="450.8" y="443" width="1.8" height="320"/><rect x="464.7" y="443" width="1.8" height="320"/><rect x="471.6" y="443" width="1.8" height="320"/><rect x="485.5" y="443" width="1.8" height="320"/><rect x="492.4" y="443" width="1.8" height="320"/><rect x="499.4" y="443" width="1.8" height="320"/><rect x="506.3" y="443" width="1.8" height="320"/><rect x="520.2" y="443" width="1.8" height="320"/><rect x="527.1" y="443" width="1.8" height="320"/><rect x="540.9" y="443" width="1.8" height="320"/><rect x="547.9" y="443" width="1.8" height="320"/><rect x="554.8" y="443" width="1.8" height="320"/><rect x="561.7" y="443" width="1.8" height="320"/><rect x="575.6" y="443" width="1.8" height="320"/><rect x="582.5" y="443" width="1.8" height="320"/><rect x="596.4" y="443" width="1.8" height="320"/><rect x="603.3" y="443" width="1.8" height="320"/><rect x="610.3" y="443" width="1.8" height="320"/><rect x="617.2" y="443" width="1.8" height="320"/><rect x="631.1" y="443" width="1.8" height="320"/><rect x="638.0" y="443" width="1.8" height="320"/><rect x="651.9" y="443" width="1.8" height="320"/><rect x="658.8" y="443" width="1.8" height="320"/><rect x="665.7" y="443" width="1.8" height="320"/><rect x="672.6" y="443" width="1.8" height="320"/><rect x="686.5" y="443" width="1.8" height="320"/><rect x="693.4" y="443" width="1.8" height="320"/><rect x="707.3" y="443" width="1.8" height="320"/><rect x="714.2" y="443" width="1.8" height="320"/><rect x="721.2" y="443" width="1.8" height="320"/><rect x="728.1" y="443" width="1.8" height="320"/><rect x="742.0" y="443" width="1.8" height="320"/><rect x="748.9" y="443" width="1.8" height="320"/><rect x="762.8" y="443" width="1.8" height="320"/><rect x="769.7" y="443" width="1.8" height="320"/><rect x="776.6" y="443" width="1.8" height="320"/><rect x="783.5" y="443" width="1.8" height="320"/><rect x="797.4" y="443" width="1.8" height="320"/><rect x="804.3" y="443" width="1.8" height="320"/><rect x="818.2" y="443" width="1.8" height="320"/><rect x="825.1" y="443" width="1.8" height="320"/><rect x="832.1" y="443" width="1.8" height="320"/><rect x="839.0" y="443" width="1.8" height="320"/><rect x="852.9" y="443" width="1.8" height="320"/><rect x="859.8" y="443" width="1.8" height="320"/><rect x="873.6" y="443" width="1.8" height="320"/><rect x="880.6" y="443" width="1.8" height="320"/><rect x="887.5" y="443" width="1.8" height="320"/><rect x="894.4" y="443" width="1.8" height="320"/><rect x="908.3" y="443" width="1.8" height="320"/><rect x="915.2" y="443" width="1.8" height="320"/><rect x="929.1" y="443" width="1.8" height="320"/><rect x="936.0" y="443" width="1.8" height="320"/><rect x="943.0" y="443" width="1.8" height="320"/><rect x="949.9" y="443" width="1.8" height="320"/><rect x="963.8" y="443" width="1.8" height="320"/><rect x="970.7" y="443" width="1.8" height="320"/><rect x="984.6" y="443" width="1.8" height="320"/><rect x="991.5" y="443" width="1.8" height="320"/><rect x="998.4" y="443" width="1.8" height="320"/><rect x="1005.3" y="443" width="1.8" height="320"/><rect x="1019.2" y="443" width="1.8" height="320"/><rect x="1026.1" y="443" width="1.8" height="320"/><rect x="1040.0" y="443" width="1.8" height="320"/><rect x="1046.9" y="443" width="1.8" height="320"/><rect x="1053.9" y="443" width="1.8" height="320"/><rect x="1060.8" y="443" width="1.8" height="320"/><rect x="1074.7" y="443" width="1.8" height="320"/><rect x="1081.6" y="443" width="1.8" height="320"/><rect x="1095.5" y="443" width="1.8" height="320"/><rect x="1102.4" y="443" width="1.8" height="320"/><rect x="1109.3" y="443" width="1.8" height="320"/></g></mask><mask id="hm2" maskUnits="userSpaceOnUse" x="0" y="0" width="1279" height="984"><g fill="url(#hg2)"><rect x="227.8" y="443" width="5.6" height="320"/><rect x="241.7" y="443" width="5.6" height="320"/><rect x="248.6" y="443" width="5.6" height="320"/><rect x="262.5" y="443" width="5.6" height="320"/><rect x="269.4" y="443" width="5.6" height="320"/><rect x="276.4" y="443" width="5.6" height="320"/><rect x="283.3" y="443" width="5.6" height="320"/><rect x="297.2" y="443" width="5.6" height="320"/><rect x="304.1" y="443" width="5.6" height="320"/><rect x="317.9" y="443" width="5.6" height="320"/><rect x="324.9" y="443" width="5.6" height="320"/><rect x="331.8" y="443" width="5.6" height="320"/><rect x="338.7" y="443" width="5.6" height="320"/><rect x="352.6" y="443" width="5.6" height="320"/><rect x="359.5" y="443" width="5.6" height="320"/><rect x="373.4" y="443" width="5.6" height="320"/><rect x="380.3" y="443" width="5.6" height="320"/><rect x="387.3" y="443" width="5.6" height="320"/><rect x="394.2" y="443" width="5.6" height="320"/><rect x="408.1" y="443" width="5.6" height="320"/><rect x="415.0" y="443" width="5.6" height="320"/><rect x="428.9" y="443" width="5.6" height="320"/><rect x="435.8" y="443" width="5.6" height="320"/><rect x="442.7" y="443" width="5.6" height="320"/><rect x="449.6" y="443" width="5.6" height="320"/><rect x="463.5" y="443" width="5.6" height="320"/><rect x="470.4" y="443" width="5.6" height="320"/><rect x="484.3" y="443" width="5.6" height="320"/><rect x="491.2" y="443" width="5.6" height="320"/><rect x="498.2" y="443" width="5.6" height="320"/><rect x="505.1" y="443" width="5.6" height="320"/><rect x="519.0" y="443" width="5.6" height="320"/><rect x="525.9" y="443" width="5.6" height="320"/><rect x="539.8" y="443" width="5.6" height="320"/><rect x="546.7" y="443" width="5.6" height="320"/><rect x="553.6" y="443" width="5.6" height="320"/><rect x="560.5" y="443" width="5.6" height="320"/><rect x="574.4" y="443" width="5.6" height="320"/><rect x="581.3" y="443" width="5.6" height="320"/><rect x="595.2" y="443" width="5.6" height="320"/><rect x="602.1" y="443" width="5.6" height="320"/><rect x="609.1" y="443" width="5.6" height="320"/><rect x="616.0" y="443" width="5.6" height="320"/><rect x="629.9" y="443" width="5.6" height="320"/><rect x="636.8" y="443" width="5.6" height="320"/><rect x="650.7" y="443" width="5.6" height="320"/><rect x="657.6" y="443" width="5.6" height="320"/><rect x="664.5" y="443" width="5.6" height="320"/><rect x="671.4" y="443" width="5.6" height="320"/><rect x="685.3" y="443" width="5.6" height="320"/><rect x="692.2" y="443" width="5.6" height="320"/><rect x="706.1" y="443" width="5.6" height="320"/><rect x="713.0" y="443" width="5.6" height="320"/><rect x="720.0" y="443" width="5.6" height="320"/><rect x="726.9" y="443" width="5.6" height="320"/><rect x="740.8" y="443" width="5.6" height="320"/><rect x="747.7" y="443" width="5.6" height="320"/><rect x="761.6" y="443" width="5.6" height="320"/><rect x="768.5" y="443" width="5.6" height="320"/><rect x="775.4" y="443" width="5.6" height="320"/><rect x="782.3" y="443" width="5.6" height="320"/><rect x="796.2" y="443" width="5.6" height="320"/><rect x="803.1" y="443" width="5.6" height="320"/><rect x="817.0" y="443" width="5.6" height="320"/><rect x="823.9" y="443" width="5.6" height="320"/><rect x="830.9" y="443" width="5.6" height="320"/><rect x="837.8" y="443" width="5.6" height="320"/><rect x="851.7" y="443" width="5.6" height="320"/><rect x="858.6" y="443" width="5.6" height="320"/><rect x="872.5" y="443" width="5.6" height="320"/><rect x="879.4" y="443" width="5.6" height="320"/><rect x="886.3" y="443" width="5.6" height="320"/><rect x="893.2" y="443" width="5.6" height="320"/><rect x="907.1" y="443" width="5.6" height="320"/><rect x="914.0" y="443" width="5.6" height="320"/><rect x="927.9" y="443" width="5.6" height="320"/><rect x="934.8" y="443" width="5.6" height="320"/><rect x="941.8" y="443" width="5.6" height="320"/><rect x="948.7" y="443" width="5.6" height="320"/><rect x="962.6" y="443" width="5.6" height="320"/><rect x="969.5" y="443" width="5.6" height="320"/><rect x="983.4" y="443" width="5.6" height="320"/><rect x="990.3" y="443" width="5.6" height="320"/><rect x="997.2" y="443" width="5.6" height="320"/><rect x="1004.1" y="443" width="5.6" height="320"/><rect x="1018.0" y="443" width="5.6" height="320"/><rect x="1024.9" y="443" width="5.6" height="320"/><rect x="1038.8" y="443" width="5.6" height="320"/><rect x="1045.7" y="443" width="5.6" height="320"/><rect x="1052.7" y="443" width="5.6" height="320"/><rect x="1059.6" y="443" width="5.6" height="320"/><rect x="1073.5" y="443" width="5.6" height="320"/><rect x="1080.4" y="443" width="5.6" height="320"/><rect x="1094.2" y="443" width="5.6" height="320"/><rect x="1101.2" y="443" width="5.6" height="320"/><rect x="1108.1" y="443" width="5.6" height="320"/></g><ellipse cx="508" cy="763" rx="75" ry="62" fill="url(#rg)" opacity="1.0"/><ellipse cx="955" cy="763" rx="85" ry="62" fill="url(#rg)" opacity="0.9"/><ellipse cx="1075" cy="763" rx="45" ry="62" fill="url(#rg)" opacity="0.6"/><ellipse cx="300" cy="763" rx="70" ry="62" fill="url(#rg)" opacity="0.5"/><ellipse cx="700" cy="763" rx="60" ry="62" fill="url(#rg)" opacity="0.4"/></mask><mask id="hz2" maskUnits="userSpaceOnUse" x="0" y="0" width="1279" height="984"><ellipse cx="508" cy="763" rx="75" ry="62" fill="url(#rg)" opacity="1.0"/><ellipse cx="955" cy="763" rx="85" ry="62" fill="url(#rg)" opacity="0.9"/><ellipse cx="1075" cy="763" rx="45" ry="62" fill="url(#rg)" opacity="0.6"/><ellipse cx="300" cy="763" rx="70" ry="62" fill="url(#rg)" opacity="0.5"/><ellipse cx="700" cy="763" rx="60" ry="62" fill="url(#rg)" opacity="0.4"/></mask><mask id="ym2" maskUnits="userSpaceOnUse" x="0" y="0" width="1279" height="984"><rect x="0" y="443" width="1279" height="320" fill="url(#yg2)"/><ellipse cx="508" cy="763" rx="75" ry="62" fill="url(#rg)" opacity="1.0"/><ellipse cx="955" cy="763" rx="85" ry="62" fill="url(#rg)" opacity="0.9"/><ellipse cx="1075" cy="763" rx="45" ry="62" fill="url(#rg)" opacity="0.6"/><ellipse cx="300" cy="763" rx="70" ry="62" fill="url(#rg)" opacity="0.5"/><ellipse cx="700" cy="763" rx="60" ry="62" fill="url(#rg)" opacity="0.4"/></mask></defs><rect x="227" y="117" width="889" height="322" fill="url(#gap1)"/>
<g fill="url(#sh)"><path d="M227.3,123 H231.3 L236.7,192 V439 H227.3 Z"/><path d="M241.2,123 H245.2 L250.6,192 V439 H241.2 Z"/><path d="M248.1,123 H252.1 L257.5,192 V439 H248.1 Z"/><path d="M262.0,123 H266.0 L271.4,192 V439 H262.0 Z"/><path d="M268.9,123 H272.9 L278.3,192 V439 H268.9 Z"/><path d="M275.9,123 H279.9 L285.3,192 V439 H275.9 Z"/><path d="M282.8,123 H286.8 L292.2,192 V439 H282.8 Z"/><path d="M296.7,123 H300.7 L306.1,192 V439 H296.7 Z"/><path d="M303.6,123 H307.6 L313.0,192 V439 H303.6 Z"/><path d="M317.4,123 H321.4 L326.9,192 V439 H317.4 Z"/><path d="M324.4,123 H328.4 L333.8,192 V439 H324.4 Z"/><path d="M331.3,123 H335.3 L340.7,192 V439 H331.3 Z"/><path d="M338.2,123 H342.2 L347.6,192 V439 H338.2 Z"/><path d="M352.1,123 H356.1 L361.5,192 V439 H352.1 Z"/><path d="M359.0,123 H363.0 L368.4,192 V439 H359.0 Z"/><path d="M372.9,123 H376.9 L382.3,192 V439 H372.9 Z"/><path d="M379.8,123 H383.8 L389.2,192 V439 H379.8 Z"/><path d="M386.8,123 H390.8 L396.2,192 V439 H386.8 Z"/><path d="M393.7,123 H397.7 L403.1,192 V439 H393.7 Z"/><path d="M407.6,123 H411.6 L417.0,192 V439 H407.6 Z"/><path d="M414.5,123 H418.5 L423.9,192 V439 H414.5 Z"/><path d="M428.4,123 H432.4 L437.8,192 V439 H428.4 Z"/><path d="M435.3,123 H439.3 L444.7,192 V439 H435.3 Z"/><path d="M442.2,123 H446.2 L451.6,192 V439 H442.2 Z"/><path d="M449.1,123 H453.1 L458.5,192 V439 H449.1 Z"/><path d="M463.0,123 H467.0 L472.4,192 V439 H463.0 Z"/><path d="M469.9,123 H473.9 L479.3,192 V439 H469.9 Z"/><path d="M483.8,123 H487.8 L493.2,192 V439 H483.8 Z"/><path d="M490.7,123 H494.7 L500.1,192 V439 H490.7 Z"/><path d="M497.7,123 H501.7 L507.1,192 V439 H497.7 Z"/><path d="M504.6,123 H508.6 L514.0,192 V439 H504.6 Z"/><path d="M518.5,123 H522.5 L527.9,192 V439 H518.5 Z"/><path d="M525.4,123 H529.4 L534.8,192 V439 H525.4 Z"/><path d="M539.2,123 H543.2 L548.6,192 V439 H539.2 Z"/><path d="M546.2,123 H550.2 L555.6,192 V439 H546.2 Z"/><path d="M553.1,123 H557.1 L562.5,192 V439 H553.1 Z"/><path d="M560.0,123 H564.0 L569.4,192 V439 H560.0 Z"/><path d="M573.9,123 H577.9 L583.3,192 V439 H573.9 Z"/><path d="M580.8,123 H584.8 L590.2,192 V439 H580.8 Z"/><path d="M594.7,123 H598.7 L604.1,192 V439 H594.7 Z"/><path d="M601.6,123 H605.6 L611.0,192 V439 H601.6 Z"/><path d="M608.6,123 H612.6 L618.0,192 V439 H608.6 Z"/><path d="M615.5,123 H619.5 L624.9,192 V439 H615.5 Z"/><path d="M629.4,123 H633.4 L638.8,192 V439 H629.4 Z"/><path d="M636.3,123 H640.3 L645.7,192 V439 H636.3 Z"/><path d="M650.2,123 H654.2 L659.6,192 V439 H650.2 Z"/><path d="M657.1,123 H661.1 L666.5,192 V439 H657.1 Z"/><path d="M664.0,123 H668.0 L673.4,192 V439 H664.0 Z"/><path d="M670.9,123 H674.9 L680.3,192 V439 H670.9 Z"/><path d="M684.8,123 H688.8 L694.2,192 V439 H684.8 Z"/><path d="M691.7,123 H695.7 L701.1,192 V439 H691.7 Z"/><path d="M705.6,123 H709.6 L715.0,192 V439 H705.6 Z"/><path d="M712.5,123 H716.5 L721.9,192 V439 H712.5 Z"/><path d="M719.5,123 H723.5 L728.9,192 V439 H719.5 Z"/><path d="M726.4,123 H730.4 L735.8,192 V439 H726.4 Z"/><path d="M740.3,123 H744.3 L749.7,192 V439 H740.3 Z"/><path d="M747.2,123 H751.2 L756.6,192 V439 H747.2 Z"/><path d="M761.1,123 H765.1 L770.5,192 V439 H761.1 Z"/><path d="M768.0,123 H772.0 L777.4,192 V439 H768.0 Z"/><path d="M774.9,123 H778.9 L784.3,192 V439 H774.9 Z"/><path d="M781.8,123 H785.8 L791.2,192 V439 H781.8 Z"/><path d="M795.7,123 H799.7 L805.1,192 V439 H795.7 Z"/><path d="M802.6,123 H806.6 L812.0,192 V439 H802.6 Z"/><path d="M816.5,123 H820.5 L825.9,192 V439 H816.5 Z"/><path d="M823.4,123 H827.4 L832.8,192 V439 H823.4 Z"/><path d="M830.4,123 H834.4 L839.8,192 V439 H830.4 Z"/><path d="M837.3,123 H841.3 L846.7,192 V439 H837.3 Z"/><path d="M851.2,123 H855.2 L860.6,192 V439 H851.2 Z"/><path d="M858.1,123 H862.1 L867.5,192 V439 H858.1 Z"/><path d="M872.0,123 H876.0 L881.4,192 V439 H872.0 Z"/><path d="M878.9,123 H882.9 L888.3,192 V439 H878.9 Z"/><path d="M885.8,123 H889.8 L895.2,192 V439 H885.8 Z"/><path d="M892.7,123 H896.7 L902.1,192 V439 H892.7 Z"/><path d="M906.6,123 H910.6 L916.0,192 V439 H906.6 Z"/><path d="M913.5,123 H917.5 L922.9,192 V439 H913.5 Z"/><path d="M927.4,123 H931.4 L936.8,192 V439 H927.4 Z"/><path d="M934.3,123 H938.3 L943.7,192 V439 H934.3 Z"/><path d="M941.3,123 H945.3 L950.7,192 V439 H941.3 Z"/><path d="M948.2,123 H952.2 L957.6,192 V439 H948.2 Z"/><path d="M962.1,123 H966.1 L971.5,192 V439 H962.1 Z"/><path d="M969.0,123 H973.0 L978.4,192 V439 H969.0 Z"/><path d="M982.9,123 H986.9 L992.3,192 V439 H982.9 Z"/><path d="M989.8,123 H993.8 L999.2,192 V439 H989.8 Z"/><path d="M996.7,123 H1000.7 L1006.1,192 V439 H996.7 Z"/><path d="M1003.6,123 H1007.6 L1013.0,192 V439 H1003.6 Z"/><path d="M1017.5,123 H1021.5 L1026.9,192 V439 H1017.5 Z"/><path d="M1024.4,123 H1028.4 L1033.8,192 V439 H1024.4 Z"/><path d="M1038.3,123 H1042.3 L1047.7,192 V439 H1038.3 Z"/><path d="M1045.2,123 H1049.2 L1054.6,192 V439 H1045.2 Z"/><path d="M1052.2,123 H1056.2 L1061.6,192 V439 H1052.2 Z"/><path d="M1059.1,123 H1063.1 L1068.5,192 V439 H1059.1 Z"/><path d="M1073.0,123 H1077.0 L1082.4,192 V439 H1073.0 Z"/><path d="M1079.9,123 H1083.9 L1089.3,192 V439 H1079.9 Z"/><path d="M1093.8,123 H1097.8 L1103.1,192 V439 H1093.8 Z"/><path d="M1100.7,123 H1104.7 L1110.1,192 V439 H1100.7 Z"/><path d="M1107.6,123 H1111.6 L1117.0,192 V439 H1107.6 Z"/></g>
<rect x="227" y="117" width="889" height="322" fill="#4a0a50" opacity="0.22" filter="url(#mot)"/>
<rect x="227" y="117" width="889" height="322" fill="#ffb858" filter="url(#spk1)" mask="url(#core1)"/>
<rect x="227" y="117" width="889" height="322" fill="#d82a20" opacity="0.55" mask="url(#hm1)"/>
<rect x="227" y="117" width="889" height="322" fill="#ff7a20" filter="url(#spk2)" mask="url(#hm1)"/>
<rect x="227" y="117" width="889" height="322" fill="#ffe070" filter="url(#spk3)" mask="url(#ym1)"/>
<rect x="227" y="117" width="889" height="322" fill="#f86020" opacity="0.6" mask="url(#hz1)"/>
<rect x="227" y="117" width="889" height="322" fill="#ffe070" filter="url(#spk2)" mask="url(#hz1)"/>
<rect x="227" y="429" width="889" height="10" fill="url(#bot)"/>
<rect x="227" y="117" width="889" height="80" fill="url(#tint)"/>
<rect x="216" y="117" width="1015" height="24" fill="url(#topfade)"/>
<rect x="1115" y="117" width="50" height="322" fill="url(#haze)"/>
<rect x="1115" y="117" width="50" height="322" fill="url(#hazev)"/>
<ellipse cx="1116" cy="439" rx="18" ry="9" fill="url(#rglow)"/>
<rect x="227" y="443" width="889" height="320" fill="url(#gap2)"/>
<g fill="url(#sh)"><path d="M227.3,449 H231.3 L236.7,518 V763 H227.3 Z"/><path d="M241.2,449 H245.2 L250.6,518 V763 H241.2 Z"/><path d="M248.1,449 H252.1 L257.5,518 V763 H248.1 Z"/><path d="M262.0,449 H266.0 L271.4,518 V763 H262.0 Z"/><path d="M268.9,449 H272.9 L278.3,518 V763 H268.9 Z"/><path d="M275.9,449 H279.9 L285.3,518 V763 H275.9 Z"/><path d="M282.8,449 H286.8 L292.2,518 V763 H282.8 Z"/><path d="M296.7,449 H300.7 L306.1,518 V763 H296.7 Z"/><path d="M303.6,449 H307.6 L313.0,518 V763 H303.6 Z"/><path d="M317.4,449 H321.4 L326.9,518 V763 H317.4 Z"/><path d="M324.4,449 H328.4 L333.8,518 V763 H324.4 Z"/><path d="M331.3,449 H335.3 L340.7,518 V763 H331.3 Z"/><path d="M338.2,449 H342.2 L347.6,518 V763 H338.2 Z"/><path d="M352.1,449 H356.1 L361.5,518 V763 H352.1 Z"/><path d="M359.0,449 H363.0 L368.4,518 V763 H359.0 Z"/><path d="M372.9,449 H376.9 L382.3,518 V763 H372.9 Z"/><path d="M379.8,449 H383.8 L389.2,518 V763 H379.8 Z"/><path d="M386.8,449 H390.8 L396.2,518 V763 H386.8 Z"/><path d="M393.7,449 H397.7 L403.1,518 V763 H393.7 Z"/><path d="M407.6,449 H411.6 L417.0,518 V763 H407.6 Z"/><path d="M414.5,449 H418.5 L423.9,518 V763 H414.5 Z"/><path d="M428.4,449 H432.4 L437.8,518 V763 H428.4 Z"/><path d="M435.3,449 H439.3 L444.7,518 V763 H435.3 Z"/><path d="M442.2,449 H446.2 L451.6,518 V763 H442.2 Z"/><path d="M449.1,449 H453.1 L458.5,518 V763 H449.1 Z"/><path d="M463.0,449 H467.0 L472.4,518 V763 H463.0 Z"/><path d="M469.9,449 H473.9 L479.3,518 V763 H469.9 Z"/><path d="M483.8,449 H487.8 L493.2,518 V763 H483.8 Z"/><path d="M490.7,449 H494.7 L500.1,518 V763 H490.7 Z"/><path d="M497.7,449 H501.7 L507.1,518 V763 H497.7 Z"/><path d="M504.6,449 H508.6 L514.0,518 V763 H504.6 Z"/><path d="M518.5,449 H522.5 L527.9,518 V763 H518.5 Z"/><path d="M525.4,449 H529.4 L534.8,518 V763 H525.4 Z"/><path d="M539.2,449 H543.2 L548.6,518 V763 H539.2 Z"/><path d="M546.2,449 H550.2 L555.6,518 V763 H546.2 Z"/><path d="M553.1,449 H557.1 L562.5,518 V763 H553.1 Z"/><path d="M560.0,449 H564.0 L569.4,518 V763 H560.0 Z"/><path d="M573.9,449 H577.9 L583.3,518 V763 H573.9 Z"/><path d="M580.8,449 H584.8 L590.2,518 V763 H580.8 Z"/><path d="M594.7,449 H598.7 L604.1,518 V763 H594.7 Z"/><path d="M601.6,449 H605.6 L611.0,518 V763 H601.6 Z"/><path d="M608.6,449 H612.6 L618.0,518 V763 H608.6 Z"/><path d="M615.5,449 H619.5 L624.9,518 V763 H615.5 Z"/><path d="M629.4,449 H633.4 L638.8,518 V763 H629.4 Z"/><path d="M636.3,449 H640.3 L645.7,518 V763 H636.3 Z"/><path d="M650.2,449 H654.2 L659.6,518 V763 H650.2 Z"/><path d="M657.1,449 H661.1 L666.5,518 V763 H657.1 Z"/><path d="M664.0,449 H668.0 L673.4,518 V763 H664.0 Z"/><path d="M670.9,449 H674.9 L680.3,518 V763 H670.9 Z"/><path d="M684.8,449 H688.8 L694.2,518 V763 H684.8 Z"/><path d="M691.7,449 H695.7 L701.1,518 V763 H691.7 Z"/><path d="M705.6,449 H709.6 L715.0,518 V763 H705.6 Z"/><path d="M712.5,449 H716.5 L721.9,518 V763 H712.5 Z"/><path d="M719.5,449 H723.5 L728.9,518 V763 H719.5 Z"/><path d="M726.4,449 H730.4 L735.8,518 V763 H726.4 Z"/><path d="M740.3,449 H744.3 L749.7,518 V763 H740.3 Z"/><path d="M747.2,449 H751.2 L756.6,518 V763 H747.2 Z"/><path d="M761.1,449 H765.1 L770.5,518 V763 H761.1 Z"/><path d="M768.0,449 H772.0 L777.4,518 V763 H768.0 Z"/><path d="M774.9,449 H778.9 L784.3,518 V763 H774.9 Z"/><path d="M781.8,449 H785.8 L791.2,518 V763 H781.8 Z"/><path d="M795.7,449 H799.7 L805.1,518 V763 H795.7 Z"/><path d="M802.6,449 H806.6 L812.0,518 V763 H802.6 Z"/><path d="M816.5,449 H820.5 L825.9,518 V763 H816.5 Z"/><path d="M823.4,449 H827.4 L832.8,518 V763 H823.4 Z"/><path d="M830.4,449 H834.4 L839.8,518 V763 H830.4 Z"/><path d="M837.3,449 H841.3 L846.7,518 V763 H837.3 Z"/><path d="M851.2,449 H855.2 L860.6,518 V763 H851.2 Z"/><path d="M858.1,449 H862.1 L867.5,518 V763 H858.1 Z"/><path d="M872.0,449 H876.0 L881.4,518 V763 H872.0 Z"/><path d="M878.9,449 H882.9 L888.3,518 V763 H878.9 Z"/><path d="M885.8,449 H889.8 L895.2,518 V763 H885.8 Z"/><path d="M892.7,449 H896.7 L902.1,518 V763 H892.7 Z"/><path d="M906.6,449 H910.6 L916.0,518 V763 H906.6 Z"/><path d="M913.5,449 H917.5 L922.9,518 V763 H913.5 Z"/><path d="M927.4,449 H931.4 L936.8,518 V763 H927.4 Z"/><path d="M934.3,449 H938.3 L943.7,518 V763 H934.3 Z"/><path d="M941.3,449 H945.3 L950.7,518 V763 H941.3 Z"/><path d="M948.2,449 H952.2 L957.6,518 V763 H948.2 Z"/><path d="M962.1,449 H966.1 L971.5,518 V763 H962.1 Z"/><path d="M969.0,449 H973.0 L978.4,518 V763 H969.0 Z"/><path d="M982.9,449 H986.9 L992.3,518 V763 H982.9 Z"/><path d="M989.8,449 H993.8 L999.2,518 V763 H989.8 Z"/><path d="M996.7,449 H1000.7 L1006.1,518 V763 H996.7 Z"/><path d="M1003.6,449 H1007.6 L1013.0,518 V763 H1003.6 Z"/><path d="M1017.5,449 H1021.5 L1026.9,518 V763 H1017.5 Z"/><path d="M1024.4,449 H1028.4 L1033.8,518 V763 H1024.4 Z"/><path d="M1038.3,449 H1042.3 L1047.7,518 V763 H1038.3 Z"/><path d="M1045.2,449 H1049.2 L1054.6,518 V763 H1045.2 Z"/><path d="M1052.2,449 H1056.2 L1061.6,518 V763 H1052.2 Z"/><path d="M1059.1,449 H1063.1 L1068.5,518 V763 H1059.1 Z"/><path d="M1073.0,449 H1077.0 L1082.4,518 V763 H1073.0 Z"/><path d="M1079.9,449 H1083.9 L1089.3,518 V763 H1079.9 Z"/><path d="M1093.8,449 H1097.8 L1103.1,518 V763 H1093.8 Z"/><path d="M1100.7,449 H1104.7 L1110.1,518 V763 H1100.7 Z"/><path d="M1107.6,449 H1111.6 L1117.0,518 V763 H1107.6 Z"/></g>
<rect x="227" y="443" width="889" height="320" fill="#4a0a50" opacity="0.22" filter="url(#mot)"/>
<rect x="227" y="443" width="889" height="320" fill="#ffb858" filter="url(#spk1)" mask="url(#core2)"/>
<rect x="227" y="443" width="889" height="320" fill="#d82a20" opacity="0.55" mask="url(#hm2)"/>
<rect x="227" y="443" width="889" height="320" fill="#ff7a20" filter="url(#spk2)" mask="url(#hm2)"/>
<rect x="227" y="443" width="889" height="320" fill="#ffe070" filter="url(#spk3)" mask="url(#ym2)"/>
<rect x="227" y="443" width="889" height="320" fill="#f86020" opacity="0.6" mask="url(#hz2)"/>
<rect x="227" y="443" width="889" height="320" fill="#ffe070" filter="url(#spk2)" mask="url(#hz2)"/>
<rect x="227" y="749" width="889" height="14" fill="url(#bot)"/>
<rect x="227" y="443" width="889" height="80" fill="url(#tint)"/>
<rect x="216" y="443" width="1015" height="24" fill="url(#topfade)"/>
<rect x="1115" y="443" width="50" height="320" fill="url(#haze)"/>
<rect x="1115" y="443" width="50" height="320" fill="url(#hazev)"/>
<ellipse cx="1116" cy="763" rx="18" ry="9" fill="url(#rglow)"/></svg></div>
<div class="a" style="left:216px;top:439px;width:1015px;height:4px;background:#595959;border-top:1px solid #bdbdbd"></div>

<div class="a" style="left:1231px;top:117px;width:1px;height:646px;background:#c8c8c8"></div><div class="a" style="left:1231px;top:438.5px;width:5px;height:1px;background:#c8c8c8"></div><div class="a" style="left:1231px;top:424.0px;width:3px;height:1px;background:#c8c8c8"></div><div class="a" style="left:1231px;top:409.6px;width:5px;height:1px;background:#c8c8c8"></div><div class="hz" style="top:404.9px">2000</div><div class="a" style="left:1231px;top:395.1px;width:3px;height:1px;background:#c8c8c8"></div><div class="a" style="left:1231px;top:380.6px;width:5px;height:1px;background:#c8c8c8"></div><div class="hz" style="top:375.9px">4000</div><div class="a" style="left:1231px;top:366.2px;width:3px;height:1px;background:#c8c8c8"></div><div class="a" style="left:1231px;top:351.7px;width:5px;height:1px;background:#c8c8c8"></div><div class="hz" style="top:347.0px">6000</div><div class="a" style="left:1231px;top:337.2px;width:3px;height:1px;background:#c8c8c8"></div><div class="a" style="left:1231px;top:322.8px;width:5px;height:1px;background:#c8c8c8"></div><div class="hz" style="top:318.1px">8000</div><div class="a" style="left:1231px;top:308.3px;width:3px;height:1px;background:#c8c8c8"></div><div class="a" style="left:1231px;top:293.9px;width:5px;height:1px;background:#c8c8c8"></div><div class="hz" style="top:289.2px">10000</div><div class="a" style="left:1231px;top:279.4px;width:3px;height:1px;background:#c8c8c8"></div><div class="a" style="left:1231px;top:264.9px;width:5px;height:1px;background:#c8c8c8"></div><div class="hz" style="top:260.2px">12000</div><div class="a" style="left:1231px;top:250.5px;width:3px;height:1px;background:#c8c8c8"></div><div class="a" style="left:1231px;top:236.0px;width:5px;height:1px;background:#c8c8c8"></div><div class="hz" style="top:231.3px">14000</div><div class="a" style="left:1231px;top:221.5px;width:3px;height:1px;background:#c8c8c8"></div><div class="a" style="left:1231px;top:207.1px;width:5px;height:1px;background:#c8c8c8"></div><div class="hz" style="top:202.4px">16000</div><div class="a" style="left:1231px;top:192.6px;width:3px;height:1px;background:#c8c8c8"></div><div class="a" style="left:1231px;top:178.1px;width:5px;height:1px;background:#c8c8c8"></div><div class="hz" style="top:173.4px">18000</div><div class="a" style="left:1231px;top:163.7px;width:3px;height:1px;background:#c8c8c8"></div><div class="a" style="left:1231px;top:149.2px;width:5px;height:1px;background:#c8c8c8"></div><div class="hz" style="top:144.5px">20000</div><div class="a" style="left:1231px;top:134.7px;width:3px;height:1px;background:#c8c8c8"></div><div class="a" style="left:1231px;top:761.4px;width:5px;height:1px;background:#c8c8c8"></div><div class="a" style="left:1231px;top:747.0px;width:3px;height:1px;background:#c8c8c8"></div><div class="a" style="left:1231px;top:732.5px;width:5px;height:1px;background:#c8c8c8"></div><div class="hz" style="top:727.8px">2000</div><div class="a" style="left:1231px;top:718.1px;width:3px;height:1px;background:#c8c8c8"></div><div class="a" style="left:1231px;top:703.6px;width:5px;height:1px;background:#c8c8c8"></div><div class="hz" style="top:698.9px">4000</div><div class="a" style="left:1231px;top:689.2px;width:3px;height:1px;background:#c8c8c8"></div><div class="a" style="left:1231px;top:674.7px;width:5px;height:1px;background:#c8c8c8"></div><div class="hz" style="top:670.0px">6000</div><div class="a" style="left:1231px;top:660.3px;width:3px;height:1px;background:#c8c8c8"></div><div class="a" style="left:1231px;top:645.8px;width:5px;height:1px;background:#c8c8c8"></div><div class="hz" style="top:641.1px">8000</div><div class="a" style="left:1231px;top:631.4px;width:3px;height:1px;background:#c8c8c8"></div><div class="a" style="left:1231px;top:617.0px;width:5px;height:1px;background:#c8c8c8"></div><div class="hz" style="top:612.3px">10000</div><div class="a" style="left:1231px;top:602.5px;width:3px;height:1px;background:#c8c8c8"></div><div class="a" style="left:1231px;top:588.1px;width:5px;height:1px;background:#c8c8c8"></div><div class="hz" style="top:583.4px">12000</div><div class="a" style="left:1231px;top:573.6px;width:3px;height:1px;background:#c8c8c8"></div><div class="a" style="left:1231px;top:559.2px;width:5px;height:1px;background:#c8c8c8"></div><div class="hz" style="top:554.5px">14000</div><div class="a" style="left:1231px;top:544.7px;width:3px;height:1px;background:#c8c8c8"></div><div class="a" style="left:1231px;top:530.3px;width:5px;height:1px;background:#c8c8c8"></div><div class="hz" style="top:525.6px">16000</div><div class="a" style="left:1231px;top:515.9px;width:3px;height:1px;background:#c8c8c8"></div><div class="a" style="left:1231px;top:501.4px;width:5px;height:1px;background:#c8c8c8"></div><div class="hz" style="top:496.7px">18000</div><div class="a" style="left:1231px;top:487.0px;width:3px;height:1px;background:#c8c8c8"></div><div class="a" style="left:1231px;top:472.5px;width:5px;height:1px;background:#c8c8c8"></div><div class="hz" style="top:467.8px">20000</div><div class="a" style="left:1231px;top:458.1px;width:3px;height:1px;background:#c8c8c8"></div><div class="a" style="left:1231px;top:117px;width:6px;height:1px;background:#c8c8c8"></div><div class="hz" style="top:119px">Hz</div><div class="hz" style="top:751px">Hz</div><div class="a" style="left:216.8px;top:763px;width:1px;height:5px;background:#d8d8d8"></div><div class="a" style="left:243.2px;top:763px;width:1px;height:3px;background:#d8d8d8"></div><div class="a" style="left:269.5px;top:763px;width:1px;height:5px;background:#d8d8d8"></div><div class="tm" style="left:270.0px">2.0</div><div class="a" style="left:295.9px;top:763px;width:1px;height:3px;background:#d8d8d8"></div><div class="a" style="left:322.2px;top:763px;width:1px;height:5px;background:#d8d8d8"></div><div class="tm" style="left:322.7px">4.0</div><div class="a" style="left:348.6px;top:763px;width:1px;height:3px;background:#d8d8d8"></div><div class="a" style="left:374.9px;top:763px;width:1px;height:5px;background:#d8d8d8"></div><div class="tm" style="left:375.4px">6.0</div><div class="a" style="left:401.2px;top:763px;width:1px;height:3px;background:#d8d8d8"></div><div class="a" style="left:427.6px;top:763px;width:1px;height:5px;background:#d8d8d8"></div><div class="tm" style="left:428.1px">8.0</div><div class="a" style="left:454.0px;top:763px;width:1px;height:3px;background:#d8d8d8"></div><div class="a" style="left:480.3px;top:763px;width:1px;height:5px;background:#d8d8d8"></div><div class="tm" style="left:480.8px">10.0</div><div class="a" style="left:506.7px;top:763px;width:1px;height:3px;background:#d8d8d8"></div><div class="a" style="left:533.0px;top:763px;width:1px;height:5px;background:#d8d8d8"></div><div class="tm" style="left:533.5px">12.0</div><div class="a" style="left:559.4px;top:763px;width:1px;height:3px;background:#d8d8d8"></div><div class="a" style="left:585.7px;top:763px;width:1px;height:5px;background:#d8d8d8"></div><div class="tm" style="left:586.2px">14.0</div><div class="a" style="left:612.0px;top:763px;width:1px;height:3px;background:#d8d8d8"></div><div class="a" style="left:638.4px;top:763px;width:1px;height:5px;background:#d8d8d8"></div><div class="tm" style="left:638.9px">16.0</div><div class="a" style="left:664.8px;top:763px;width:1px;height:3px;background:#d8d8d8"></div><div class="a" style="left:691.1px;top:763px;width:1px;height:5px;background:#d8d8d8"></div><div class="tm" style="left:691.6px">18.0</div><div class="a" style="left:717.5px;top:763px;width:1px;height:3px;background:#d8d8d8"></div><div class="a" style="left:743.8px;top:763px;width:1px;height:5px;background:#d8d8d8"></div><div class="tm" style="left:744.3px">20.0</div><div class="a" style="left:770.2px;top:763px;width:1px;height:3px;background:#d8d8d8"></div><div class="a" style="left:796.5px;top:763px;width:1px;height:5px;background:#d8d8d8"></div><div class="tm" style="left:797.0px">22.0</div><div class="a" style="left:822.9px;top:763px;width:1px;height:3px;background:#d8d8d8"></div><div class="a" style="left:849.2px;top:763px;width:1px;height:5px;background:#d8d8d8"></div><div class="tm" style="left:849.7px">24.0</div><div class="a" style="left:875.5px;top:763px;width:1px;height:3px;background:#d8d8d8"></div><div class="a" style="left:901.9px;top:763px;width:1px;height:5px;background:#d8d8d8"></div><div class="tm" style="left:902.4px">26.0</div><div class="a" style="left:928.2px;top:763px;width:1px;height:3px;background:#d8d8d8"></div><div class="a" style="left:954.6px;top:763px;width:1px;height:5px;background:#d8d8d8"></div><div class="tm" style="left:955.1px">28.0</div><div class="a" style="left:981.0px;top:763px;width:1px;height:3px;background:#d8d8d8"></div><div class="a" style="left:1007.3px;top:763px;width:1px;height:5px;background:#d8d8d8"></div><div class="tm" style="left:1007.8px">30.0</div><div class="a" style="left:1033.7px;top:763px;width:1px;height:3px;background:#d8d8d8"></div><div class="a" style="left:1060.0px;top:763px;width:1px;height:5px;background:#d8d8d8"></div><div class="tm" style="left:1060.5px">32.0</div><div class="a" style="left:1086.4px;top:763px;width:1px;height:3px;background:#d8d8d8"></div><div class="a" style="left:1112.7px;top:763px;width:1px;height:5px;background:#d8d8d8"></div><div class="tm" style="left:1113.2px">34.0</div><div class="a" style="left:1139.0px;top:763px;width:1px;height:3px;background:#d8d8d8"></div><div class="a" style="left:1165.4px;top:763px;width:1px;height:5px;background:#d8d8d8"></div><div class="tm" style="left:1165.9px">36.0</div><div class="a" style="left:216px;top:763px;width:1015px;height:1px;background:#b8b8b8"></div><div class="t" style="left:218.5px;top:767.5px;font-size:10.5px;color:#e8e8e8">hms</div><div class="t" style="left:1209px;top:767.5px;font-size:10.5px;color:#e8e8e8">hms</div>
<!-- tree scrollbars -->
<svg class="a" style="left:0;top:95px" width="205" height="700">
 <defs>
  <linearGradient id="thv" x1="0" y1="0" x2="1" y2="0"><stop offset="0" stop-color="#fafafa"/><stop offset="0.5" stop-color="#e8e8ea"/><stop offset="1" stop-color="#cfd0d4"/></linearGradient>
  <linearGradient id="thh" x1="0" y1="0" x2="0" y2="1"><stop offset="0" stop-color="#fafafa"/><stop offset="0.5" stop-color="#e8e8ea"/><stop offset="1" stop-color="#cfd0d4"/></linearGradient>
 </defs>
 <rect x="183" y="5" width="17" height="628" fill="#efefef"/>
 <rect x="183" y="5" width="1" height="628" fill="#fbfbfb"/>
 <path d="M187.5,17 L191.5,12.5 L195.5,17 Z" fill="#333"/>
 <rect x="184.5" y="23.5" width="14" height="363" rx="2" fill="url(#thv)" stroke="#9a9a9a"/>
 <path d="M188,201 H195 M188,203.5 H195 M188,206 H195" stroke="#555" stroke-width="1"/>
 <path d="M187.5,621 L191.5,625.5 L195.5,621 Z" fill="#333"/>
 <rect x="4" y="633" width="196" height="16" fill="#efefef"/>
 <path d="M14.5,637 L10.5,641 L14.5,645 Z" fill="#333"/>
 <path d="M173,637 L177,641 L173,645 Z" fill="#333"/>
 <rect x="22.5" y="634.5" width="118" height="13" rx="2" fill="url(#thh)" stroke="#9a9a9a"/>
 <path d="M78.5,638 V644 M81,638 V644 M83.5,638 V644" stroke="#555" stroke-width="1"/>
</svg>
<!-- main panel inner details -->
<svg class="a" style="left:208px;top:89px" width="1070" height="702">
 <path d="M5,21 H14 L9.5,27 Z" fill="#f0e020" stroke="#807000" stroke-width="0.6"/>
 <path d="M4.5,700 H14.5 L9.5,694 Z" fill="#f0e020" stroke="#807000" stroke-width="0.6"/>
 <line x1="9.5" y1="29" x2="9.5" y2="673" stroke="#f4f0c0" stroke-width="1.2" stroke-dasharray="1.2,2.8"/>
</svg>
<svg class="a" style="left:227px;top:128px" width="11" height="11"><rect x="0.5" y="0.5" width="10" height="10" fill="#9a9a9a"/><path d="M0.5,0.5 H10.5 L0.5,10.5 Z" fill="#cfcfcf"/><path d="M0.5,10.5 L10.5,0.5" stroke="#333" stroke-width="0.8"/></svg>
<svg class="a" style="left:1210px;top:128px" width="11" height="11"><rect x="0.5" y="0.5" width="10" height="10" fill="#8a8a8a"/><path d="M0.5,0.5 H10.5 V10.5 Z" fill="#c8c8c8"/><path d="M0.5,0.5 L10.5,10.5" stroke="#333" stroke-width="0.8"/></svg>

<!-- BOTTOM PANELS -->
<svg class="a" style="left:2px;top:799px;overflow:visible" width="312" height="85"><defs><linearGradient id="stT" x1="0" y1="0" x2="0" y2="1"><stop offset="0" stop-color="#5e5e5e"/><stop offset="1" stop-color="#9c9c9c"/></linearGradient><linearGradient id="taT" x1="0" y1="0" x2="0" y2="1"><stop offset="0" stop-color="#cdcdcd"/><stop offset="1" stop-color="#ababab"/></linearGradient><linearGradient id="tiT" x1="0" y1="0" x2="0" y2="1"><stop offset="0" stop-color="#a6a6a6"/><stop offset="1" stop-color="#8c8c8c"/></linearGradient></defs><rect x="0" y="0" width="312" height="16" fill="url(#stT)"/><rect x="0" y="16" width="312" height="69" fill="#a9a9a9"/><rect x="0" y="16" width="312" height="1" fill="#d2d2d2"/><path d="M6,17 V5 Q6,1 10,1 H82 C88,1 89,17 96,17 Z" fill="url(#taT)" stroke="#d6d6d6" stroke-width="1"/><rect x="7" y="16" width="90" height="2" fill="#ababab"/><g transform="translate(9,5)"><rect x="0" y="0.0" width="2" height="2" fill="#e0e0e0"/><rect x="3" y="1.5" width="2" height="2" fill="#e0e0e0"/><rect x="0" y="3.3" width="2" height="2" fill="#e0e0e0"/><rect x="3" y="4.8" width="2" height="2" fill="#e0e0e0"/><rect x="0" y="6.6" width="2" height="2" fill="#e0e0e0"/><rect x="3" y="8.1" width="2" height="2" fill="#e0e0e0"/></g><path d="M73.0,6.5 L78.0,11.5 M78.0,6.5 L73.0,11.5" stroke="#111" stroke-width="1.6"/><path d="M279,17 C284,17 283,0 290,0 H309 Q312,0 312,3 V17 Z" fill="url(#taT)"/><g transform="translate(285.5,4.0)"><rect x="3" y="0" width="2" height="2" fill="#e6e6e6" opacity="0.85"/><rect x="7" y="0" width="2" height="2" fill="#e6e6e6" opacity="0.85"/><rect x="0" y="4" width="2" height="2" fill="#e6e6e6" opacity="0.85"/><rect x="4" y="4" width="2" height="2" fill="#e6e6e6" opacity="0.85"/></g><circle cx="300.9" cy="8.8" r="6" fill="#b4b4b4" stroke="#444" stroke-width="1"/><path d="M298.7,5.300000000000001 L304.4,8.8 L298.7,12.3 Z" fill="#111"/></svg><svg class="a" style="left:321px;top:799px;overflow:visible" width="116.5" height="85"><defs><linearGradient id="stI" x1="0" y1="0" x2="0" y2="1"><stop offset="0" stop-color="#5e5e5e"/><stop offset="1" stop-color="#9c9c9c"/></linearGradient><linearGradient id="taI" x1="0" y1="0" x2="0" y2="1"><stop offset="0" stop-color="#cdcdcd"/><stop offset="1" stop-color="#ababab"/></linearGradient><linearGradient id="tiI" x1="0" y1="0" x2="0" y2="1"><stop offset="0" stop-color="#a6a6a6"/><stop offset="1" stop-color="#8c8c8c"/></linearGradient></defs><rect x="0" y="0" width="116.5" height="16" fill="url(#stI)"/><rect x="0" y="16" width="116.5" height="69" fill="#a9a9a9"/><rect x="0" y="16" width="116.5" height="1" fill="#d2d2d2"/><path d="M5.5,17 V5 Q5.5,1 9.5,1 H58 C64,1 65,17 72,17 Z" fill="url(#taI)" stroke="#d6d6d6" stroke-width="1"/><rect x="6.5" y="16" width="66.5" height="2" fill="#ababab"/><g transform="translate(8.5,5)"><rect x="0" y="0.0" width="2" height="2" fill="#e0e0e0"/><rect x="3" y="1.5" width="2" height="2" fill="#e0e0e0"/><rect x="0" y="3.3" width="2" height="2" fill="#e0e0e0"/><rect x="3" y="4.8" width="2" height="2" fill="#e0e0e0"/><rect x="0" y="6.6" width="2" height="2" fill="#e0e0e0"/><rect x="3" y="8.1" width="2" height="2" fill="#e0e0e0"/></g><path d="M49.5,6.5 L54.5,11.5 M54.5,6.5 L49.5,11.5" stroke="#111" stroke-width="1.6"/><path d="M83.69999999999999,17 C88.69999999999999,17 87.69999999999999,0 94.69999999999999,0 H113.5 Q116.5,0 116.5,3 V17 Z" fill="url(#taI)"/><g transform="translate(90.19999999999999,4.0)"><rect x="3" y="0" width="2" height="2" fill="#e6e6e6" opacity="0.85"/><rect x="7" y="0" width="2" height="2" fill="#e6e6e6" opacity="0.85"/><rect x="0" y="4" width="2" height="2" fill="#e6e6e6" opacity="0.85"/><rect x="4" y="4" width="2" height="2" fill="#e6e6e6" opacity="0.85"/></g><circle cx="105.4" cy="8.8" r="6" fill="#b4b4b4" stroke="#444" stroke-width="1"/><path d="M103.2,5.300000000000001 L108.9,8.8 L103.2,12.3 Z" fill="#111"/></svg><svg class="a" style="left:445px;top:799px;overflow:visible" width="138" height="85"><defs><linearGradient id="stZ" x1="0" y1="0" x2="0" y2="1"><stop offset="0" stop-color="#5e5e5e"/><stop offset="1" stop-color="#9c9c9c"/></linearGradient><linearGradient id="taZ" x1="0" y1="0" x2="0" y2="1"><stop offset="0" stop-color="#cdcdcd"/><stop offset="1" stop-color="#ababab"/></linearGradient><linearGradient id="tiZ" x1="0" y1="0" x2="0" y2="1"><stop offset="0" stop-color="#a6a6a6"/><stop offset="1" stop-color="#8c8c8c"/></linearGradient></defs><rect x="0" y="0" width="138" height="16" fill="url(#stZ)"/><rect x="0" y="16" width="138" height="69" fill="#a9a9a9"/><rect x="0" y="16" width="138" height="1" fill="#d2d2d2"/><path d="M5,17 V5 Q5,1 9,1 H63 C69,1 70,17 77,17 Z" fill="url(#taZ)" stroke="#d6d6d6" stroke-width="1"/><rect x="6" y="16" width="72" height="2" fill="#ababab"/><g transform="translate(8,5)"><rect x="0" y="0.0" width="2" height="2" fill="#e0e0e0"/><rect x="3" y="1.5" width="2" height="2" fill="#e0e0e0"/><rect x="0" y="3.3" width="2" height="2" fill="#e0e0e0"/><rect x="3" y="4.8" width="2" height="2" fill="#e0e0e0"/><rect x="0" y="6.6" width="2" height="2" fill="#e0e0e0"/><rect x="3" y="8.1" width="2" height="2" fill="#e0e0e0"/></g><path d="M53.5,6.5 L58.5,11.5 M58.5,6.5 L53.5,11.5" stroke="#111" stroke-width="1.6"/><path d="M105,17 C110,17 109,0 116,0 H135 Q138,0 138,3 V17 Z" fill="url(#taZ)"/><g transform="translate(111.5,4.0)"><rect x="3" y="0" width="2" height="2" fill="#e6e6e6" opacity="0.85"/><rect x="7" y="0" width="2" height="2" fill="#e6e6e6" opacity="0.85"/><rect x="0" y="4" width="2" height="2" fill="#e6e6e6" opacity="0.85"/><rect x="4" y="4" width="2" height="2" fill="#e6e6e6" opacity="0.85"/></g><circle cx="126.9" cy="8.8" r="6" fill="#b4b4b4" stroke="#444" stroke-width="1"/><path d="M124.7,5.300000000000001 L130.4,8.8 L124.7,12.3 Z" fill="#111"/></svg><svg class="a" style="left:590px;top:799px;overflow:visible" width="688" height="85"><defs><linearGradient id="stS" x1="0" y1="0" x2="0" y2="1"><stop offset="0" stop-color="#5e5e5e"/><stop offset="1" stop-color="#9c9c9c"/></linearGradient><linearGradient id="taS" x1="0" y1="0" x2="0" y2="1"><stop offset="0" stop-color="#cdcdcd"/><stop offset="1" stop-color="#ababab"/></linearGradient><linearGradient id="tiS" x1="0" y1="0" x2="0" y2="1"><stop offset="0" stop-color="#a6a6a6"/><stop offset="1" stop-color="#8c8c8c"/></linearGradient></defs><rect x="0" y="0" width="688" height="16" fill="url(#stS)"/><rect x="0" y="16" width="688" height="69" fill="#a9a9a9"/><rect x="0" y="16" width="688" height="1" fill="#d2d2d2"/><path d="M6,17 V5 Q6,1 10,1 H103 C109,1 110,17 117,17 Z" fill="url(#taS)" stroke="#d6d6d6" stroke-width="1"/><rect x="7" y="16" width="111" height="2" fill="#ababab"/><g transform="translate(9,5)"><rect x="0" y="0.0" width="2" height="2" fill="#e0e0e0"/><rect x="3" y="1.5" width="2" height="2" fill="#e0e0e0"/><rect x="0" y="3.3" width="2" height="2" fill="#e0e0e0"/><rect x="3" y="4.8" width="2" height="2" fill="#e0e0e0"/><rect x="0" y="6.6" width="2" height="2" fill="#e0e0e0"/><rect x="3" y="8.1" width="2" height="2" fill="#e0e0e0"/></g><path d="M95.5,6.5 L100.5,11.5 M100.5,6.5 L95.5,11.5" stroke="#111" stroke-width="1.6"/><path d="M654,17 C659,17 658,0 665,0 H685 Q688,0 688,3 V17 Z" fill="url(#taS)"/><g transform="translate(660.5,4.0)"><rect x="3" y="0" width="2" height="2" fill="#e6e6e6" opacity="0.85"/><rect x="7" y="0" width="2" height="2" fill="#e6e6e6" opacity="0.85"/><rect x="0" y="4" width="2" height="2" fill="#e6e6e6" opacity="0.85"/><rect x="4" y="4" width="2" height="2" fill="#e6e6e6" opacity="0.85"/></g><circle cx="676.9" cy="8.8" r="6" fill="#b4b4b4" stroke="#444" stroke-width="1"/><path d="M674.6999999999999,5.300000000000001 L680.4,8.8 L674.6999999999999,12.3 Z" fill="#111"/></svg>
<div class="t f11" style="left:20px;top:802px;color:#111">Transport</div>
<div class="t f11" style="left:338px;top:802px;color:#111">Time</div>
<div class="t f11" style="left:462px;top:802px;color:#111">Zoom</div>
<div class="t f11" style="left:607px;top:802px;color:#111">Selection/View</div>
<div class="t" style="left:343px;top:838px;font-size:22px;letter-spacing:-0.6px;color:#111">0:00.000</div>
<div class="t f11" style="left:647px;top:820px;color:#111">Begin</div>
<div class="t f11" style="left:722px;top:820px;color:#111">End</div>
<div class="t f11" style="left:797px;top:820px;color:#111">Length</div>
<div class="t f11" style="left:594px;top:838px;color:#111">Selection</div>
<div class="t f11" style="left:614px;top:858px;color:#111">View</div>
<div class="field" style="left:642px;top:836px;width:72px">0:00.000</div>
<div class="field" style="left:717px;top:836px;width:72px"></div>
<div class="field" style="left:792px;top:836px;width:72px">0:00.000</div>
<div class="field" style="left:642px;top:856px;width:72px">0:00.000</div>
<div class="field" style="left:717px;top:856px;width:72px">0:38.400</div>
<div class="field" style="left:792px;top:856px;width:72px">0:38.400</div>

<!-- LEVELS -->
<svg class="a" style="left:2px;top:892px;overflow:visible" width="1276" height="68"><defs><linearGradient id="stV" x1="0" y1="0" x2="0" y2="1"><stop offset="0" stop-color="#5e5e5e"/><stop offset="1" stop-color="#9c9c9c"/></linearGradient><linearGradient id="taV" x1="0" y1="0" x2="0" y2="1"><stop offset="0" stop-color="#cdcdcd"/><stop offset="1" stop-color="#ababab"/></linearGradient><linearGradient id="tiV" x1="0" y1="0" x2="0" y2="1"><stop offset="0" stop-color="#a6a6a6"/><stop offset="1" stop-color="#8c8c8c"/></linearGradient></defs><rect x="0" y="0" width="1276" height="15" fill="url(#stV)"/><rect x="0" y="15" width="1276" height="53" fill="#a9a9a9"/><rect x="0" y="15" width="1276" height="1" fill="#d2d2d2"/><path d="M6,16 V5 Q6,1 10,1 H62 C68,1 69,16 76,16 Z" fill="url(#taV)" stroke="#d6d6d6" stroke-width="1"/><rect x="7" y="15" width="70" height="2" fill="#ababab"/><g transform="translate(9,5)"><rect x="0" y="0.0" width="2" height="2" fill="#e0e0e0"/><rect x="3" y="1.5" width="2" height="2" fill="#e0e0e0"/><rect x="0" y="3.3" width="2" height="2" fill="#e0e0e0"/><rect x="3" y="4.8" width="2" height="2" fill="#e0e0e0"/><rect x="0" y="6.6" width="2" height="2" fill="#e0e0e0"/><rect x="3" y="8.1" width="2" height="2" fill="#e0e0e0"/></g><path d="M55.5,6.0 L60.5,11.0 M60.5,6.0 L55.5,11.0" stroke="#111" stroke-width="1.6"/><path d="M1240,16 C1245,16 1244,0 1251,0 H1273 Q1276,0 1276,3 V16 Z" fill="url(#taV)"/><g transform="translate(1246.5,3.5)"><rect x="3" y="0" width="2" height="2" fill="#e6e6e6" opacity="0.85"/><rect x="7" y="0" width="2" height="2" fill="#e6e6e6" opacity="0.85"/><rect x="0" y="4" width="2" height="2" fill="#e6e6e6" opacity="0.85"/><rect x="4" y="4" width="2" height="2" fill="#e6e6e6" opacity="0.85"/></g><circle cx="1264.9" cy="8.3" r="6" fill="#b4b4b4" stroke="#444" stroke-width="1"/><path d="M1262.7,4.800000000000001 L1268.4,8.3 L1262.7,11.8 Z" fill="#111"/></svg>
<div class="t f11" style="left:20px;top:894px;color:#111">Levels</div>
<div class="a" style="left:5px;top:910px;width:1270px;height:30px;background:#000"></div>

<!-- transport buttons -->
<svg class="a" style="left:0;top:815px" width="320" height="70">
 <defs>
  <linearGradient id="tb" x1="0" y1="0" x2="0" y2="1"><stop offset="0" stop-color="#bdbdbd"/><stop offset="1" stop-color="#a2a2a2"/></linearGradient>
  <linearGradient id="tbd" x1="0" y1="0" x2="0" y2="1"><stop offset="0" stop-color="#b8b8b8"/><stop offset="1" stop-color="#a8a8a8"/></linearGradient>
 </defs>
 <g stroke-width="1">
 <rect x="7.5" y="6.5" width="26.5" height="24" rx="3" fill="url(#tbd)" stroke="#9a9a9a"/>
 <rect x="37.5" y="6.5" width="26.5" height="24" rx="3" fill="url(#tb)" stroke="#666"/>
 <rect x="67.5" y="6.5" width="26.5" height="24" rx="3" fill="url(#tbd)" stroke="#9a9a9a"/>
 <rect x="97.5" y="6.5" width="26.5" height="24" rx="3" fill="url(#tb)" stroke="#666"/>
 <rect x="127.5" y="6.5" width="26.5" height="24" rx="3" fill="url(#tb)" stroke="#666"/>
 <rect x="157.5" y="6.5" width="26.5" height="24" rx="3" fill="url(#tb)" stroke="#666"/>
 <rect x="187.5" y="6.5" width="26.5" height="24" rx="3" fill="url(#tb)" stroke="#666"/>
 <rect x="217.5" y="6.5" width="26.5" height="24" rx="3" fill="url(#tb)" stroke="#666"/>
 <rect x="247.5" y="6.5" width="26.5" height="24" rx="3" fill="url(#tb)" stroke="#666"/>
 <rect x="277.5" y="6.5" width="26.5" height="24" rx="3" fill="url(#tb)" stroke="#666"/>
 </g>
 <rect x="17.5" y="15" width="6" height="7" fill="#8a8a8a"/>
 <path d="M49,14 L55.5,18.5 L49,23 Z" fill="#333"/>
 <rect x="77.5" y="15" width="2.5" height="7" fill="#8a8a8a"/><rect x="82.5" y="15" width="2.5" height="7" fill="#8a8a8a"/>
 <circle cx="111" cy="18.5" r="5.8" fill="none" stroke="#333" stroke-width="1.3"/>
 <path d="M110,14.8 L114.5,18.5 L110,22.2 Z" fill="#333"/>
 <path d="M134.5,16 H144 V14 L147,17 L144,20 V18 H136.5 V20.5 H145.5 V22.5 H134.5 Z" fill="#333"/>
 <rect x="166.5" y="14" width="2" height="9" fill="#333"/><path d="M176,14 L169.5,18.5 L176,23 Z" fill="#333"/>
 <path d="M201,14.5 L196,18.5 L201,22.5 Z M206,14.5 L201,18.5 L206,22.5 Z" fill="#333"/>
 <path d="M228,14.5 L233,18.5 L228,22.5 Z M233,14.5 L238,18.5 L233,22.5 Z" fill="#333"/>
 <path d="M256.5,14 L263,18.5 L256.5,23 Z" fill="#333"/><rect x="263.5" y="14" width="2" height="9" fill="#333"/>
 <circle cx="291" cy="18.5" r="3.8" fill="#c8202a"/>
</svg>
<!-- zoom icons -->
<svg class="a" style="left:445px;top:815px" width="140" height="70">
 <defs>
  <radialGradient id="lens" cx="0.4" cy="0.35" r="0.7"><stop offset="0" stop-color="#f8f8f8"/><stop offset="1" stop-color="#a0a0a0"/></radialGradient>
 </defs>
 <g id="zi">
 <path d="M14.5,12 H25 M14.5,12 L16.5,10.5 M14.5,12 L16.5,13.5 M25,12 L23,10.5 M25,12 L23,13.5" stroke="#111" stroke-width="1.3" fill="none"/>
 <circle cx="18" cy="19" r="4.6" fill="url(#lens)" stroke="#222" stroke-width="1.1"/>
 <path d="M21.5,22.5 L25.5,26.5" stroke="#111" stroke-width="1.8"/>
 <path d="M15.8,19 H20.2 M18,16.8 V21.2" stroke="#111" stroke-width="1.2"/>
 </g>
 <g opacity="0.45">
 <path d="M44.5,12 H55 M44.5,12 L46.5,10.5 M44.5,12 L46.5,13.5 M55,12 L53,10.5 M55,12 L53,13.5" stroke="#222" stroke-width="1.2" fill="none"/>
 <circle cx="48" cy="19" r="4.6" fill="url(#lens)" stroke="#333" stroke-width="1.1"/>
 <path d="M51.5,22.5 L55.5,26.5" stroke="#222" stroke-width="1.8"/>
 <path d="M45.8,19 H50.2" stroke="#222" stroke-width="1.2"/>
 <circle cx="78" cy="18.5" r="4.6" fill="url(#lens)" stroke="#333" stroke-width="1.1"/>
 <path d="M81.5,22 L85.5,26" stroke="#222" stroke-width="1.8"/>
 <path d="M75.8,18.5 H80.2" stroke="#222" stroke-width="1.2"/>
 <path d="M78,11 V12.5 M78,25 V26.5 M70.5,18.5 H72 M84.5,18.5 H86" stroke="#222" stroke-width="1.2"/>
 </g>
 <rect x="101.5" y="11" width="13" height="14.5" fill="#d8d8d8" stroke="#111" stroke-width="1" stroke-dasharray="1,1"/>
 <circle cx="107" cy="17" r="4.6" fill="url(#lens)" stroke="#222" stroke-width="1"/>
 <path d="M110.5,20.5 L114.5,24.5" stroke="#111" stroke-width="1.8"/>
 <rect x="21" y="38.5" width="9" height="14.5" fill="#d8d8d8" stroke="#111" stroke-width="1" stroke-dasharray="1,1"/>
 <circle cx="17" cy="43" r="4.6" fill="url(#lens)" stroke="#222" stroke-width="1"/>
 <path d="M20.5,46.5 L24.5,50.5" stroke="#111" stroke-width="1.8"/>
<g transform="translate(-2,0)"> <rect x="44" y="38.5" width="9" height="14.5" fill="#d8d8d8" stroke="#111" stroke-width="1" stroke-dasharray="1,1"/>
 <circle cx="51" cy="43" r="4.6" fill="url(#lens)" stroke="#222" stroke-width="1"/>
 <path d="M54.5,46.5 L58.5,50.5" stroke="#111" stroke-width="1.8"/></g>
 <line x1="66.5" y1="33" x2="66.5" y2="59" stroke="#555"/>
<g transform="translate(-5,0)"> <path d="M80,38 V54 M80,38 L78.5,40.5 M80,38 L81.5,40.5 M80,54 L78.5,51.5 M80,54 L81.5,51.5" stroke="#111" stroke-width="1.4" fill="none"/>
 <circle cx="88" cy="44" r="4.6" fill="url(#lens)" stroke="#222" stroke-width="1.1"/>
 <path d="M91.5,47.5 L95.5,51.5" stroke="#111" stroke-width="1.8"/>
 <path d="M85.8,44 H90.2 M88,41.8 V46.2" stroke="#111" stroke-width="1.2"/></g>
 <g opacity="0.45" transform="translate(-7,0)">
 <path d="M110,38 V54" stroke="#222" stroke-width="1.2"/>
 <circle cx="118" cy="44" r="4.6" fill="url(#lens)" stroke="#333" stroke-width="1.1"/>
 <path d="M121.5,47.5 L125.5,51.5" stroke="#222" stroke-width="1.8"/>
 <path d="M115.8,44 H120.2" stroke="#222" stroke-width="1.2"/>
 </g>
</svg>
<!-- level meter details -->
<svg class="a" style="left:0;top:908px" width="1279" height="35">
 <line x1="6.5" y1="4" x2="6.5" y2="17" stroke="#f0e8b0" stroke-width="1"/>
 <line x1="6.5" y1="19" x2="6.5" y2="31" stroke="#f0e8b0" stroke-width="1"/>
 <rect x="1265" y="3" width="13" height="30" fill="#a9a9a9"/>
 <rect x="1266.5" y="3.5" width="9" height="14" fill="#000" stroke="#d8d8d8"/>
 <rect x="1266.5" y="18.5" width="9" height="14" fill="#000" stroke="#d8d8d8"/>
</svg>

<div class="a" style="left:5.8px;top:941px;width:1px;height:4px;background:#111"></div><div class="a" style="left:23.2px;top:941px;width:1px;height:2px;background:#111"></div><div class="a" style="left:40.7px;top:941px;width:1px;height:2px;background:#111"></div><div class="a" style="left:58.2px;top:941px;width:1px;height:4px;background:#111"></div><div class="db" style="left:58.7px">-69</div><div class="a" style="left:75.6px;top:941px;width:1px;height:2px;background:#111"></div><div class="a" style="left:93.1px;top:941px;width:1px;height:2px;background:#111"></div><div class="a" style="left:110.5px;top:941px;width:1px;height:4px;background:#111"></div><div class="db" style="left:111.0px">-66</div><div class="a" style="left:128.0px;top:941px;width:1px;height:2px;background:#111"></div><div class="a" style="left:145.5px;top:941px;width:1px;height:2px;background:#111"></div><div class="a" style="left:162.9px;top:941px;width:1px;height:4px;background:#111"></div><div class="db" style="left:163.4px">-63</div><div class="a" style="left:180.4px;top:941px;width:1px;height:2px;background:#111"></div><div class="a" style="left:197.8px;top:941px;width:1px;height:2px;background:#111"></div><div class="a" style="left:215.3px;top:941px;width:1px;height:4px;background:#111"></div><div class="db" style="left:215.8px">-60</div><div class="a" style="left:232.8px;top:941px;width:1px;height:2px;background:#111"></div><div class="a" style="left:250.2px;top:941px;width:1px;height:2px;background:#111"></div><div class="a" style="left:267.7px;top:941px;width:1px;height:4px;background:#111"></div><div class="db" style="left:268.2px">-57</div><div class="a" style="left:285.1px;top:941px;width:1px;height:2px;background:#111"></div><div class="a" style="left:302.6px;top:941px;width:1px;height:2px;background:#111"></div><div class="a" style="left:320.1px;top:941px;width:1px;height:4px;background:#111"></div><div class="db" style="left:320.6px">-54</div><div class="a" style="left:337.5px;top:941px;width:1px;height:2px;background:#111"></div><div class="a" style="left:355.0px;top:941px;width:1px;height:2px;background:#111"></div><div class="a" style="left:372.4px;top:941px;width:1px;height:4px;background:#111"></div><div class="db" style="left:372.9px">-51</div><div class="a" style="left:389.9px;top:941px;width:1px;height:2px;background:#111"></div><div class="a" style="left:407.4px;top:941px;width:1px;height:2px;background:#111"></div><div class="a" style="left:424.8px;top:941px;width:1px;height:4px;background:#111"></div><div class="db" style="left:425.3px">-48</div><div class="a" style="left:442.3px;top:941px;width:1px;height:2px;background:#111"></div><div class="a" style="left:459.7px;top:941px;width:1px;height:2px;background:#111"></div><div class="a" style="left:477.2px;top:941px;width:1px;height:4px;background:#111"></div><div class="db" style="left:477.7px">-45</div><div class="a" style="left:494.7px;top:941px;width:1px;height:2px;background:#111"></div><div class="a" style="left:512.1px;top:941px;width:1px;height:2px;background:#111"></div><div class="a" style="left:529.6px;top:941px;width:1px;height:4px;background:#111"></div><div class="db" style="left:530.1px">-42</div><div class="a" style="left:547.0px;top:941px;width:1px;height:2px;background:#111"></div><div class="a" style="left:564.5px;top:941px;width:1px;height:2px;background:#111"></div><div class="a" style="left:582.0px;top:941px;width:1px;height:4px;background:#111"></div><div class="db" style="left:582.5px">-39</div><div class="a" style="left:599.4px;top:941px;width:1px;height:2px;background:#111"></div><div class="a" style="left:616.9px;top:941px;width:1px;height:2px;background:#111"></div><div class="a" style="left:634.3px;top:941px;width:1px;height:4px;background:#111"></div><div class="db" style="left:634.8px">-36</div><div class="a" style="left:651.8px;top:941px;width:1px;height:2px;background:#111"></div><div class="a" style="left:669.3px;top:941px;width:1px;height:2px;background:#111"></div><div class="a" style="left:686.7px;top:941px;width:1px;height:4px;background:#111"></div><div class="db" style="left:687.2px">-33</div><div class="a" style="left:704.2px;top:941px;width:1px;height:2px;background:#111"></div><div class="a" style="left:721.6px;top:941px;width:1px;height:2px;background:#111"></div><div class="a" style="left:739.1px;top:941px;width:1px;height:4px;background:#111"></div><div class="db" style="left:739.6px">-30</div><div class="a" style="left:756.6px;top:941px;width:1px;height:2px;background:#111"></div><div class="a" style="left:774.0px;top:941px;width:1px;height:2px;background:#111"></div><div class="a" style="left:791.5px;top:941px;width:1px;height:4px;background:#111"></div><div class="db" style="left:792.0px">-27</div><div class="a" style="left:808.9px;top:941px;width:1px;height:2px;background:#111"></div><div class="a" style="left:826.4px;top:941px;width:1px;height:2px;background:#111"></div><div class="a" style="left:843.9px;top:941px;width:1px;height:4px;background:#111"></div><div class="db" style="left:844.4px">-24</div><div class="a" style="left:861.3px;top:941px;width:1px;height:2px;background:#111"></div><div class="a" style="left:878.8px;top:941px;width:1px;height:2px;background:#111"></div><div class="a" style="left:896.2px;top:941px;width:1px;height:4px;background:#111"></div><div class="db" style="left:896.7px">-21</div><div class="a" style="left:913.7px;top:941px;width:1px;height:2px;background:#111"></div><div class="a" style="left:931.2px;top:941px;width:1px;height:2px;background:#111"></div><div class="a" style="left:948.6px;top:941px;width:1px;height:4px;background:#111"></div><div class="db" style="left:949.1px">-18</div><div class="a" style="left:966.1px;top:941px;width:1px;height:2px;background:#111"></div><div class="a" style="left:983.5px;top:941px;width:1px;height:2px;background:#111"></div><div class="a" style="left:1001.0px;top:941px;width:1px;height:4px;background:#111"></div><div class="db" style="left:1001.5px">-15</div><div class="a" style="left:1018.5px;top:941px;width:1px;height:2px;background:#111"></div><div class="a" style="left:1035.9px;top:941px;width:1px;height:2px;background:#111"></div><div class="a" style="left:1053.4px;top:941px;width:1px;height:4px;background:#111"></div><div class="db" style="left:1053.9px">-12</div><div class="a" style="left:1070.8px;top:941px;width:1px;height:2px;background:#111"></div><div class="a" style="left:1088.3px;top:941px;width:1px;height:2px;background:#111"></div><div class="a" style="left:1105.8px;top:941px;width:1px;height:4px;background:#111"></div><div class="db" style="left:1106.3px">-9</div><div class="a" style="left:1123.2px;top:941px;width:1px;height:2px;background:#111"></div><div class="a" style="left:1140.7px;top:941px;width:1px;height:2px;background:#111"></div><div class="a" style="left:1158.1px;top:941px;width:1px;height:4px;background:#111"></div><div class="db" style="left:1158.6px">-6</div><div class="a" style="left:1175.6px;top:941px;width:1px;height:2px;background:#111"></div><div class="a" style="left:1193.1px;top:941px;width:1px;height:2px;background:#111"></div><div class="a" style="left:1210.5px;top:941px;width:1px;height:4px;background:#111"></div><div class="db" style="left:1211.0px">-3</div><div class="a" style="left:1228.0px;top:941px;width:1px;height:2px;background:#111"></div><div class="a" style="left:1245.4px;top:941px;width:1px;height:2px;background:#111"></div><div class="a" style="left:1262.9px;top:941px;width:1px;height:4px;background:#111"></div><div class="db" style="left:1263.4px">0</div><div class="t" style="left:5px;top:945px;font-size:10px;color:#222">dB</div>
<!-- STATUS -->
<div class="a" style="left:0;top:960px;width:1279px;height:24px;background:linear-gradient(#d9d9d9,#bdbdbd);border-top:1px solid #6a6a6a"></div>
<div class="st" style="left:6px">Opened in 0.42 seconds</div>
<div class="st" style="left:519px">R: -22.8 dB @</div>
<div class="st" style="left:597px">0:02.518, 68Hz</div>
<div class="st" style="left:688px">44100 • 16-bit • Stereo</div>
<div class="st" style="left:822px">6.45 MB</div>
<div class="st" style="left:899px">220.93 GB free</div>
<div class="st" style="left:996px">373:33:18.34 free</div>
<div class="st" style="left:1175px">Spectral Frequency</div>
<div class="sep" style="left:680px"></div><div class="sep" style="left:813px"></div><div class="sep" style="left:891px"></div><div class="sep" style="left:988px"></div><div class="sep" style="left:1094px"></div><div class="sep" style="left:1167px"></div>
</body></html>
